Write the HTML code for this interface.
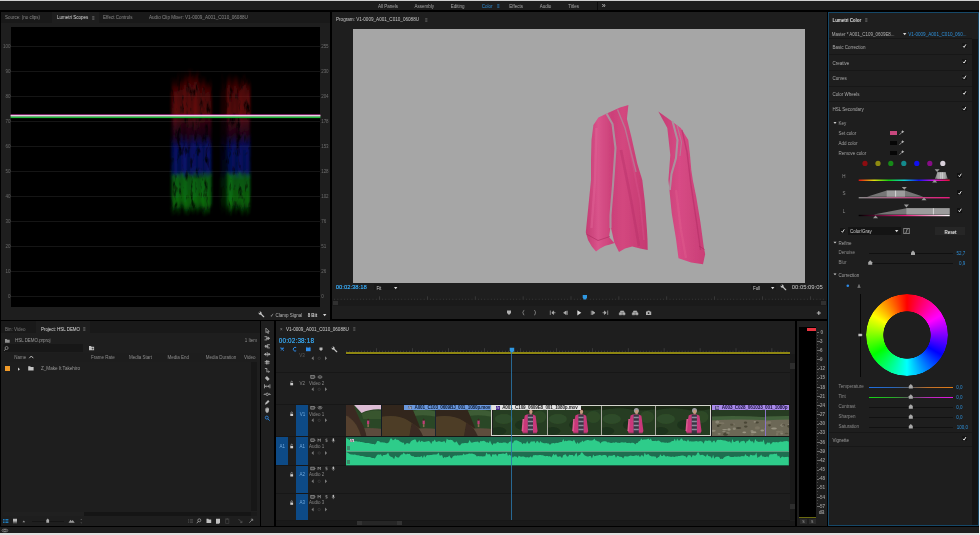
<!DOCTYPE html>
<html><head><meta charset="utf-8"><title>Premiere Pro - Lumetri Color</title>
<style>
html,body{margin:0;padding:0;background:#000}
body{width:980px;height:535px;position:relative;overflow:hidden;font-family:"Liberation Sans",sans-serif}
#app{position:absolute;left:0;top:0;width:980px;height:535px;will-change:transform}
#app>div,#app>svg{position:absolute}
svg{overflow:visible}
.t{white-space:nowrap}
</style></head><body><div id="app">
<div style="left:0px;top:0px;width:980px;height:1.05px;background:#d0d0d0;"></div>
<div style="left:0px;top:1.05px;width:980px;height:9.45px;background:#1d1d1d;"></div>
<div style="left:0px;top:533.3px;width:980px;height:1.7px;background:#e0e0e0;"></div>
<div style="left:0px;top:527.3px;width:980px;height:6px;background:#1d1d1d;"></div>
<div class="t" style="left:377.9px;top:4.20px;font-size:4.5px;line-height:5.40px;color:#a8a8a8;">All Panels</div>
<div class="t" style="left:414.4px;top:4.20px;font-size:4.5px;line-height:5.40px;color:#a8a8a8;">Assembly</div>
<div class="t" style="left:450.7px;top:4.20px;font-size:4.5px;line-height:5.40px;color:#a8a8a8;">Editing</div>
<div class="t" style="left:481.7px;top:4.20px;font-size:4.5px;line-height:5.40px;color:#2e8fd8;">Color</div>
<div class="t" style="left:509.3px;top:4.20px;font-size:4.5px;line-height:5.40px;color:#a8a8a8;">Effects</div>
<div class="t" style="left:539.8px;top:4.20px;font-size:4.5px;line-height:5.40px;color:#a8a8a8;">Audio</div>
<div class="t" style="left:568.3px;top:4.20px;font-size:4.5px;line-height:5.40px;color:#a8a8a8;">Titles</div>
<svg style="left:497.3px;top:4px" width="3" height="4" viewBox="0 0 3 4"><path d="M0.2 0.7 h2.2 M0.2 2 h2.2 M0.2 3.3 h2.2" stroke="#2e8fd8" stroke-width="0.6"/></svg>
<div class="t" style="left:601.8px;top:2.00px;font-size:7px;line-height:8.40px;color:#c4c4c4;">»</div>
<div style="left:596.5px;top:1.5px;width:0.6px;height:8.5px;background:#0c0c0c;"></div>
<div style="left:1.1px;top:12px;width:328.9px;height:307.5px;background:#1e1e1e;"></div>
<div style="left:1.1px;top:12px;width:328.9px;height:10.6px;background:#191919;"></div>
<div style="left:52px;top:12px;width:46.5px;height:10.6px;background:#1e1e1e;"></div>
<div class="t" style="left:5px;top:15.00px;font-size:4.5px;line-height:5.40px;color:#8a8a8a;">Source: (no clips)</div>
<div class="t" style="left:57px;top:15.00px;font-size:4.5px;line-height:5.40px;color:#dcdcdc;">Lumetri Scopes</div>
<svg style="left:92px;top:15.8px" width="3" height="4" viewBox="0 0 3 4"><path d="M0.2 0.7 h2.2 M0.2 2 h2.2 M0.2 3.3 h2.2" stroke="#8a8a8a" stroke-width="0.6"/></svg>
<div class="t" style="left:103px;top:15.00px;font-size:4.5px;line-height:5.40px;color:#8a8a8a;">Effect Controls</div>
<div class="t" style="left:149px;top:14.94px;font-size:4.6px;line-height:5.52px;color:#8a8a8a;">Audio Clip Mixer: V1-0009_A001_C010_06088U</div>
<div style="left:10.6px;top:27px;width:309.9px;height:280.3px;background:#000;"></div>
<div style="left:11px;top:45.7px;width:309.5px;height:0.7px;background:#151515;"></div>
<div class="t" style="right:969.7px;top:44.30px;font-size:4.5px;line-height:5.40px;color:#6c6c6c;text-align:right;letter-spacing:-0.10px;">100</div>
<div class="t" style="left:321.3px;top:44.30px;font-size:4.5px;line-height:5.40px;color:#6c6c6c;letter-spacing:-0.10px;">255</div>
<div style="left:11px;top:70.7px;width:309.5px;height:0.7px;background:#151515;"></div>
<div class="t" style="right:969.7px;top:69.30px;font-size:4.5px;line-height:5.40px;color:#6c6c6c;text-align:right;letter-spacing:-0.10px;">90</div>
<div class="t" style="left:321.3px;top:69.30px;font-size:4.5px;line-height:5.40px;color:#6c6c6c;letter-spacing:-0.10px;">230</div>
<div style="left:11px;top:95.7px;width:309.5px;height:0.7px;background:#151515;"></div>
<div class="t" style="right:969.7px;top:94.30px;font-size:4.5px;line-height:5.40px;color:#6c6c6c;text-align:right;letter-spacing:-0.10px;">80</div>
<div class="t" style="left:321.3px;top:94.30px;font-size:4.5px;line-height:5.40px;color:#6c6c6c;letter-spacing:-0.10px;">204</div>
<div style="left:11px;top:120.7px;width:309.5px;height:0.7px;background:#151515;"></div>
<div class="t" style="right:969.7px;top:119.30px;font-size:4.5px;line-height:5.40px;color:#6c6c6c;text-align:right;letter-spacing:-0.10px;">70</div>
<div class="t" style="left:321.3px;top:119.30px;font-size:4.5px;line-height:5.40px;color:#6c6c6c;letter-spacing:-0.10px;">178</div>
<div style="left:11px;top:145.7px;width:309.5px;height:0.7px;background:#151515;"></div>
<div class="t" style="right:969.7px;top:144.30px;font-size:4.5px;line-height:5.40px;color:#6c6c6c;text-align:right;letter-spacing:-0.10px;">60</div>
<div class="t" style="left:321.3px;top:144.30px;font-size:4.5px;line-height:5.40px;color:#6c6c6c;letter-spacing:-0.10px;">153</div>
<div style="left:11px;top:170.7px;width:309.5px;height:0.7px;background:#151515;"></div>
<div class="t" style="right:969.7px;top:169.30px;font-size:4.5px;line-height:5.40px;color:#6c6c6c;text-align:right;letter-spacing:-0.10px;">50</div>
<div class="t" style="left:321.3px;top:169.30px;font-size:4.5px;line-height:5.40px;color:#6c6c6c;letter-spacing:-0.10px;">128</div>
<div style="left:11px;top:195.7px;width:309.5px;height:0.7px;background:#151515;"></div>
<div class="t" style="right:969.7px;top:194.30px;font-size:4.5px;line-height:5.40px;color:#6c6c6c;text-align:right;letter-spacing:-0.10px;">40</div>
<div class="t" style="left:321.3px;top:194.30px;font-size:4.5px;line-height:5.40px;color:#6c6c6c;letter-spacing:-0.10px;">102</div>
<div style="left:11px;top:220.7px;width:309.5px;height:0.7px;background:#151515;"></div>
<div class="t" style="right:969.7px;top:219.30px;font-size:4.5px;line-height:5.40px;color:#6c6c6c;text-align:right;letter-spacing:-0.10px;">30</div>
<div class="t" style="left:321.3px;top:219.30px;font-size:4.5px;line-height:5.40px;color:#6c6c6c;letter-spacing:-0.10px;">76</div>
<div style="left:11px;top:245.7px;width:309.5px;height:0.7px;background:#151515;"></div>
<div class="t" style="right:969.7px;top:244.30px;font-size:4.5px;line-height:5.40px;color:#6c6c6c;text-align:right;letter-spacing:-0.10px;">20</div>
<div class="t" style="left:321.3px;top:244.30px;font-size:4.5px;line-height:5.40px;color:#6c6c6c;letter-spacing:-0.10px;">51</div>
<div style="left:11px;top:270.7px;width:309.5px;height:0.7px;background:#151515;"></div>
<div class="t" style="right:969.7px;top:269.30px;font-size:4.5px;line-height:5.40px;color:#6c6c6c;text-align:right;letter-spacing:-0.10px;">10</div>
<div class="t" style="left:321.3px;top:269.30px;font-size:4.5px;line-height:5.40px;color:#6c6c6c;letter-spacing:-0.10px;">26</div>
<div style="left:11px;top:295.7px;width:309.5px;height:0.7px;background:#151515;"></div>
<div class="t" style="right:969.7px;top:294.30px;font-size:4.5px;line-height:5.40px;color:#6c6c6c;text-align:right;letter-spacing:-0.10px;">0</div>
<div class="t" style="left:321.3px;top:294.30px;font-size:4.5px;line-height:5.40px;color:#6c6c6c;letter-spacing:-0.10px;">0</div>
<svg style="left:0px;top:0px;" width="330" height="320" viewBox="0 0 330 320"><defs>
<linearGradient id="gr" x1="0" y1="0" x2="0" y2="1"><stop offset="0" stop-color="#8a0c0c" stop-opacity="0"/><stop offset="0.3" stop-color="#8a0c0c" stop-opacity="0.8"/><stop offset="1" stop-color="#8e0e10"/></linearGradient>
<linearGradient id="gp" x1="0" y1="0" x2="0" y2="1"><stop offset="0" stop-color="#8a1020"/><stop offset="1" stop-color="#5a1060" stop-opacity="0.3"/></linearGradient>
<linearGradient id="gb" x1="0" y1="0" x2="0" y2="1"><stop offset="0" stop-color="#101aa0" stop-opacity="0.2"/><stop offset="0.25" stop-color="#0c1cb0"/><stop offset="0.85" stop-color="#0c22a8"/><stop offset="1" stop-color="#0a3a70"/></linearGradient>
<linearGradient id="gg" x1="0" y1="0" x2="0" y2="1"><stop offset="0" stop-color="#0c7a1a"/><stop offset="0.75" stop-color="#0e8a12"/><stop offset="1" stop-color="#0a6a0a" stop-opacity="0.15"/></linearGradient>
<filter id="bl" x="-5%" y="-5%" width="110%" height="110%"><feTurbulence type="fractalNoise" baseFrequency="0.22 0.07" numOctaves="3" seed="5" result="n"/><feColorMatrix in="n" type="matrix" values="0 0 0 0 0 0 0 0 0 0 0 0 0 0 0 2.8 0 0 0 -0.3" result="a"/><feGaussianBlur in="SourceGraphic" stdDeviation="0.8" result="b"/><feComposite in="b" in2="a" operator="in"/></filter>
</defs><g filter="url(#bl)" opacity="0.88"><rect x="170.5" y="85.4" width="1.1" height="31.6" fill="url(#gr)" opacity="0.28"/><rect x="170.5" y="118" width="1.1" height="27.4" fill="url(#gp)" opacity="0.12"/><rect x="170.5" y="135.7" width="1.1" height="38.7" fill="url(#gb)" opacity="0.19"/><rect x="170.5" y="172.2" width="1.1" height="39.7" fill="url(#gg)" opacity="0.24"/><rect x="171.4" y="74.7" width="1.1" height="42.3" fill="url(#gr)" opacity="0.57"/><rect x="171.4" y="118" width="1.1" height="24.2" fill="url(#gp)" opacity="0.23"/><rect x="171.4" y="138.3" width="1.1" height="41.4" fill="url(#gb)" opacity="0.38"/><rect x="171.4" y="174.4" width="1.1" height="42.4" fill="url(#gg)" opacity="0.43"/><rect x="172.3" y="81.0" width="1.1" height="36.0" fill="url(#gr)" opacity="0.54"/><rect x="172.3" y="118" width="1.1" height="25.1" fill="url(#gp)" opacity="0.33"/><rect x="172.3" y="140.2" width="1.1" height="34.9" fill="url(#gb)" opacity="0.55"/><rect x="172.3" y="175.8" width="1.1" height="35.5" fill="url(#gg)" opacity="0.80"/><rect x="173.2" y="81.2" width="1.1" height="35.8" fill="url(#gr)" opacity="0.59"/><rect x="173.2" y="118" width="1.1" height="26.3" fill="url(#gp)" opacity="0.57"/><rect x="173.2" y="135.1" width="1.1" height="42.4" fill="url(#gb)" opacity="0.53"/><rect x="173.2" y="173.8" width="1.1" height="41.4" fill="url(#gg)" opacity="0.89"/><rect x="174.1" y="74.3" width="1.1" height="42.7" fill="url(#gr)" opacity="0.74"/><rect x="174.1" y="118" width="1.1" height="29.3" fill="url(#gp)" opacity="0.65"/><rect x="174.1" y="134.9" width="1.1" height="45.0" fill="url(#gb)" opacity="0.40"/><rect x="174.1" y="174.5" width="1.1" height="40.3" fill="url(#gg)" opacity="0.70"/><rect x="175.0" y="84.0" width="1.1" height="33.0" fill="url(#gr)" opacity="0.80"/><rect x="175.0" y="118" width="1.1" height="27.7" fill="url(#gp)" opacity="0.61"/><rect x="175.0" y="140.8" width="1.1" height="35.1" fill="url(#gb)" opacity="0.63"/><rect x="175.0" y="175.6" width="1.1" height="37.7" fill="url(#gg)" opacity="0.81"/><rect x="175.9" y="78.6" width="1.1" height="38.4" fill="url(#gr)" opacity="0.71"/><rect x="175.9" y="118" width="1.1" height="22.6" fill="url(#gp)" opacity="0.57"/><rect x="175.9" y="139.0" width="1.1" height="38.9" fill="url(#gb)" opacity="0.75"/><rect x="175.9" y="176.9" width="1.1" height="33.6" fill="url(#gg)" opacity="0.79"/><rect x="176.8" y="84.5" width="1.1" height="32.5" fill="url(#gr)" opacity="0.71"/><rect x="176.8" y="118" width="1.1" height="23.2" fill="url(#gp)" opacity="0.37"/><rect x="176.8" y="132.6" width="1.1" height="46.0" fill="url(#gb)" opacity="0.40"/><rect x="176.8" y="173.5" width="1.1" height="38.0" fill="url(#gg)" opacity="0.95"/><rect x="177.7" y="70.7" width="1.1" height="46.3" fill="url(#gr)" opacity="0.75"/><rect x="177.7" y="118" width="1.1" height="30.2" fill="url(#gp)" opacity="0.65"/><rect x="177.7" y="140.6" width="1.1" height="35.0" fill="url(#gb)" opacity="0.52"/><rect x="177.7" y="174.2" width="1.1" height="41.8" fill="url(#gg)" opacity="0.99"/><rect x="178.6" y="78.9" width="1.1" height="38.1" fill="url(#gr)" opacity="0.60"/><rect x="178.6" y="118" width="1.1" height="26.8" fill="url(#gp)" opacity="0.39"/><rect x="178.6" y="137.9" width="1.1" height="37.7" fill="url(#gb)" opacity="0.35"/><rect x="178.6" y="174.5" width="1.1" height="36.8" fill="url(#gg)" opacity="0.85"/><rect x="179.5" y="77.7" width="1.1" height="39.3" fill="url(#gr)" opacity="0.73"/><rect x="179.5" y="118" width="1.1" height="28.8" fill="url(#gp)" opacity="0.55"/><rect x="179.5" y="132.5" width="1.1" height="46.9" fill="url(#gb)" opacity="0.66"/><rect x="179.5" y="177.2" width="1.1" height="37.9" fill="url(#gg)" opacity="0.79"/><rect x="180.4" y="80.3" width="1.1" height="36.7" fill="url(#gr)" opacity="0.79"/><rect x="180.4" y="118" width="1.1" height="22.7" fill="url(#gp)" opacity="0.32"/><rect x="180.4" y="134.1" width="1.1" height="40.9" fill="url(#gb)" opacity="0.49"/><rect x="180.4" y="172.3" width="1.1" height="35.7" fill="url(#gg)" opacity="0.70"/><rect x="181.3" y="69.2" width="1.1" height="47.8" fill="url(#gr)" opacity="0.51"/><rect x="181.3" y="118" width="1.1" height="28.1" fill="url(#gp)" opacity="0.65"/><rect x="181.3" y="133.5" width="1.1" height="42.0" fill="url(#gb)" opacity="0.49"/><rect x="181.3" y="174.2" width="1.1" height="34.9" fill="url(#gg)" opacity="0.95"/><rect x="182.2" y="76.8" width="1.1" height="40.2" fill="url(#gr)" opacity="0.72"/><rect x="182.2" y="118" width="1.1" height="23.0" fill="url(#gp)" opacity="0.33"/><rect x="182.2" y="135.4" width="1.1" height="40.2" fill="url(#gb)" opacity="0.68"/><rect x="182.2" y="173.0" width="1.1" height="35.2" fill="url(#gg)" opacity="0.98"/><rect x="183.1" y="80.3" width="1.1" height="36.7" fill="url(#gr)" opacity="0.74"/><rect x="183.1" y="118" width="1.1" height="27.3" fill="url(#gp)" opacity="0.31"/><rect x="183.1" y="141.8" width="1.1" height="37.4" fill="url(#gb)" opacity="0.63"/><rect x="183.1" y="173.6" width="1.1" height="37.7" fill="url(#gg)" opacity="0.71"/><rect x="184.0" y="74.1" width="1.1" height="42.9" fill="url(#gr)" opacity="0.85"/><rect x="184.0" y="118" width="1.1" height="24.2" fill="url(#gp)" opacity="0.43"/><rect x="184.0" y="140.1" width="1.1" height="39.8" fill="url(#gb)" opacity="0.69"/><rect x="184.0" y="176.8" width="1.1" height="38.5" fill="url(#gg)" opacity="0.91"/><rect x="184.9" y="68.9" width="1.1" height="48.1" fill="url(#gr)" opacity="0.66"/><rect x="184.9" y="118" width="1.1" height="22.3" fill="url(#gp)" opacity="0.31"/><rect x="184.9" y="134.8" width="1.1" height="40.8" fill="url(#gb)" opacity="0.63"/><rect x="184.9" y="177.7" width="1.1" height="34.3" fill="url(#gg)" opacity="0.98"/><rect x="185.8" y="75.5" width="1.1" height="41.5" fill="url(#gr)" opacity="0.66"/><rect x="185.8" y="118" width="1.1" height="24.3" fill="url(#gp)" opacity="0.39"/><rect x="185.8" y="134.0" width="1.1" height="41.3" fill="url(#gb)" opacity="0.60"/><rect x="185.8" y="177.4" width="1.1" height="38.2" fill="url(#gg)" opacity="0.82"/><rect x="186.7" y="72.2" width="1.1" height="44.8" fill="url(#gr)" opacity="0.54"/><rect x="186.7" y="118" width="1.1" height="31.1" fill="url(#gp)" opacity="0.56"/><rect x="186.7" y="139.8" width="1.1" height="38.7" fill="url(#gb)" opacity="0.54"/><rect x="186.7" y="173.1" width="1.1" height="42.0" fill="url(#gg)" opacity="0.77"/><rect x="187.6" y="73.4" width="1.1" height="43.6" fill="url(#gr)" opacity="0.68"/><rect x="187.6" y="118" width="1.1" height="31.5" fill="url(#gp)" opacity="0.46"/><rect x="187.6" y="139.2" width="1.1" height="35.8" fill="url(#gb)" opacity="0.40"/><rect x="187.6" y="172.9" width="1.1" height="43.2" fill="url(#gg)" opacity="0.93"/><rect x="188.5" y="67.3" width="1.1" height="49.7" fill="url(#gr)" opacity="0.94"/><rect x="188.5" y="118" width="1.1" height="25.5" fill="url(#gp)" opacity="0.56"/><rect x="188.5" y="137.5" width="1.1" height="37.3" fill="url(#gb)" opacity="0.36"/><rect x="188.5" y="177.8" width="1.1" height="36.0" fill="url(#gg)" opacity="0.83"/><rect x="189.4" y="74.4" width="1.1" height="42.6" fill="url(#gr)" opacity="0.89"/><rect x="189.4" y="118" width="1.1" height="24.1" fill="url(#gp)" opacity="0.63"/><rect x="189.4" y="134.5" width="1.1" height="41.2" fill="url(#gb)" opacity="0.45"/><rect x="189.4" y="175.5" width="1.1" height="34.8" fill="url(#gg)" opacity="0.80"/><rect x="190.3" y="67.3" width="1.1" height="49.7" fill="url(#gr)" opacity="0.66"/><rect x="190.3" y="118" width="1.1" height="27.8" fill="url(#gp)" opacity="0.48"/><rect x="190.3" y="141.0" width="1.1" height="35.5" fill="url(#gb)" opacity="0.72"/><rect x="190.3" y="175.0" width="1.1" height="37.8" fill="url(#gg)" opacity="0.83"/><rect x="191.2" y="66.5" width="1.1" height="50.5" fill="url(#gr)" opacity="0.58"/><rect x="191.2" y="118" width="1.1" height="30.0" fill="url(#gp)" opacity="0.30"/><rect x="191.2" y="133.7" width="1.1" height="43.1" fill="url(#gb)" opacity="0.64"/><rect x="191.2" y="175.3" width="1.1" height="35.6" fill="url(#gg)" opacity="0.83"/><rect x="192.1" y="71.6" width="1.1" height="45.4" fill="url(#gr)" opacity="0.55"/><rect x="192.1" y="118" width="1.1" height="24.5" fill="url(#gp)" opacity="0.52"/><rect x="192.1" y="134.8" width="1.1" height="43.9" fill="url(#gb)" opacity="0.55"/><rect x="192.1" y="175.4" width="1.1" height="39.5" fill="url(#gg)" opacity="0.97"/><rect x="193.0" y="70.9" width="1.1" height="46.1" fill="url(#gr)" opacity="0.73"/><rect x="193.0" y="118" width="1.1" height="28.9" fill="url(#gp)" opacity="0.50"/><rect x="193.0" y="136.5" width="1.1" height="40.7" fill="url(#gb)" opacity="0.54"/><rect x="193.0" y="177.6" width="1.1" height="36.6" fill="url(#gg)" opacity="0.96"/><rect x="193.9" y="75.7" width="1.1" height="41.3" fill="url(#gr)" opacity="0.75"/><rect x="193.9" y="118" width="1.1" height="30.4" fill="url(#gp)" opacity="0.68"/><rect x="193.9" y="133.4" width="1.1" height="41.4" fill="url(#gb)" opacity="0.53"/><rect x="193.9" y="172.4" width="1.1" height="37.7" fill="url(#gg)" opacity="0.68"/><rect x="194.8" y="73.5" width="1.1" height="43.5" fill="url(#gr)" opacity="0.90"/><rect x="194.8" y="118" width="1.1" height="29.2" fill="url(#gp)" opacity="0.36"/><rect x="194.8" y="138.6" width="1.1" height="36.3" fill="url(#gb)" opacity="0.70"/><rect x="194.8" y="177.8" width="1.1" height="32.2" fill="url(#gg)" opacity="0.98"/><rect x="195.7" y="71.5" width="1.1" height="45.5" fill="url(#gr)" opacity="0.95"/><rect x="195.7" y="118" width="1.1" height="23.6" fill="url(#gp)" opacity="0.63"/><rect x="195.7" y="136.3" width="1.1" height="40.8" fill="url(#gb)" opacity="0.49"/><rect x="195.7" y="173.2" width="1.1" height="37.7" fill="url(#gg)" opacity="0.90"/><rect x="196.6" y="68.4" width="1.1" height="48.6" fill="url(#gr)" opacity="0.70"/><rect x="196.6" y="118" width="1.1" height="25.3" fill="url(#gp)" opacity="0.31"/><rect x="196.6" y="138.2" width="1.1" height="38.8" fill="url(#gb)" opacity="0.38"/><rect x="196.6" y="177.9" width="1.1" height="37.2" fill="url(#gg)" opacity="0.99"/><rect x="197.5" y="69.6" width="1.1" height="47.4" fill="url(#gr)" opacity="0.52"/><rect x="197.5" y="118" width="1.1" height="24.7" fill="url(#gp)" opacity="0.61"/><rect x="197.5" y="133.3" width="1.1" height="43.2" fill="url(#gb)" opacity="0.71"/><rect x="197.5" y="176.9" width="1.1" height="33.4" fill="url(#gg)" opacity="0.70"/><rect x="198.4" y="77.4" width="1.1" height="39.6" fill="url(#gr)" opacity="0.82"/><rect x="198.4" y="118" width="1.1" height="22.6" fill="url(#gp)" opacity="0.34"/><rect x="198.4" y="138.9" width="1.1" height="37.7" fill="url(#gb)" opacity="0.38"/><rect x="198.4" y="177.6" width="1.1" height="36.1" fill="url(#gg)" opacity="0.93"/><rect x="199.3" y="70.3" width="1.1" height="46.7" fill="url(#gr)" opacity="0.53"/><rect x="199.3" y="118" width="1.1" height="26.5" fill="url(#gp)" opacity="0.65"/><rect x="199.3" y="135.4" width="1.1" height="41.9" fill="url(#gb)" opacity="0.72"/><rect x="199.3" y="173.6" width="1.1" height="35.6" fill="url(#gg)" opacity="0.83"/><rect x="200.2" y="80.2" width="1.1" height="36.8" fill="url(#gr)" opacity="0.57"/><rect x="200.2" y="118" width="1.1" height="24.0" fill="url(#gp)" opacity="0.32"/><rect x="200.2" y="135.1" width="1.1" height="40.7" fill="url(#gb)" opacity="0.65"/><rect x="200.2" y="173.7" width="1.1" height="38.8" fill="url(#gg)" opacity="0.71"/><rect x="201.1" y="81.6" width="1.1" height="35.4" fill="url(#gr)" opacity="0.61"/><rect x="201.1" y="118" width="1.1" height="29.3" fill="url(#gp)" opacity="0.31"/><rect x="201.1" y="137.5" width="1.1" height="37.6" fill="url(#gb)" opacity="0.54"/><rect x="201.1" y="177.6" width="1.1" height="31.3" fill="url(#gg)" opacity="0.94"/><rect x="202.0" y="74.9" width="1.1" height="42.1" fill="url(#gr)" opacity="0.88"/><rect x="202.0" y="118" width="1.1" height="27.1" fill="url(#gp)" opacity="0.46"/><rect x="202.0" y="138.9" width="1.1" height="41.0" fill="url(#gb)" opacity="0.49"/><rect x="202.0" y="177.0" width="1.1" height="37.4" fill="url(#gg)" opacity="0.87"/><rect x="202.9" y="75.2" width="1.1" height="41.8" fill="url(#gr)" opacity="0.52"/><rect x="202.9" y="118" width="1.1" height="22.7" fill="url(#gp)" opacity="0.35"/><rect x="202.9" y="139.4" width="1.1" height="36.1" fill="url(#gb)" opacity="0.42"/><rect x="202.9" y="172.5" width="1.1" height="43.1" fill="url(#gg)" opacity="0.95"/><rect x="203.8" y="78.1" width="1.1" height="38.9" fill="url(#gr)" opacity="0.61"/><rect x="203.8" y="118" width="1.1" height="26.6" fill="url(#gp)" opacity="0.42"/><rect x="203.8" y="133.6" width="1.1" height="43.1" fill="url(#gb)" opacity="0.46"/><rect x="203.8" y="177.8" width="1.1" height="39.0" fill="url(#gg)" opacity="0.84"/><rect x="204.7" y="74.9" width="1.1" height="42.1" fill="url(#gr)" opacity="0.64"/><rect x="204.7" y="118" width="1.1" height="22.0" fill="url(#gp)" opacity="0.44"/><rect x="204.7" y="135.8" width="1.1" height="41.0" fill="url(#gb)" opacity="0.55"/><rect x="204.7" y="173.2" width="1.1" height="39.3" fill="url(#gg)" opacity="0.65"/><rect x="205.6" y="83.6" width="1.1" height="33.4" fill="url(#gr)" opacity="0.68"/><rect x="205.6" y="118" width="1.1" height="22.2" fill="url(#gp)" opacity="0.32"/><rect x="205.6" y="135.0" width="1.1" height="40.4" fill="url(#gb)" opacity="0.58"/><rect x="205.6" y="175.2" width="1.1" height="39.6" fill="url(#gg)" opacity="0.88"/><rect x="206.5" y="80.3" width="1.1" height="36.7" fill="url(#gr)" opacity="0.68"/><rect x="206.5" y="118" width="1.1" height="31.8" fill="url(#gp)" opacity="0.43"/><rect x="206.5" y="133.5" width="1.1" height="44.9" fill="url(#gb)" opacity="0.61"/><rect x="206.5" y="172.3" width="1.1" height="43.3" fill="url(#gg)" opacity="0.96"/><rect x="207.4" y="80.1" width="1.1" height="36.9" fill="url(#gr)" opacity="0.87"/><rect x="207.4" y="118" width="1.1" height="27.2" fill="url(#gp)" opacity="0.36"/><rect x="207.4" y="137.0" width="1.1" height="42.0" fill="url(#gb)" opacity="0.67"/><rect x="207.4" y="177.0" width="1.1" height="36.3" fill="url(#gg)" opacity="0.96"/><rect x="208.3" y="81.2" width="1.1" height="35.8" fill="url(#gr)" opacity="0.60"/><rect x="208.3" y="118" width="1.1" height="23.3" fill="url(#gp)" opacity="0.31"/><rect x="208.3" y="135.6" width="1.1" height="39.0" fill="url(#gb)" opacity="0.68"/><rect x="208.3" y="175.4" width="1.1" height="38.3" fill="url(#gg)" opacity="0.87"/><rect x="209.2" y="81.8" width="1.1" height="35.2" fill="url(#gr)" opacity="0.50"/><rect x="209.2" y="118" width="1.1" height="29.5" fill="url(#gp)" opacity="0.62"/><rect x="209.2" y="137.0" width="1.1" height="40.2" fill="url(#gb)" opacity="0.61"/><rect x="209.2" y="172.4" width="1.1" height="42.2" fill="url(#gg)" opacity="0.74"/><rect x="210.1" y="77.0" width="1.1" height="40.0" fill="url(#gr)" opacity="0.68"/><rect x="210.1" y="118" width="1.1" height="29.4" fill="url(#gp)" opacity="0.31"/><rect x="210.1" y="141.8" width="1.1" height="35.2" fill="url(#gb)" opacity="0.41"/><rect x="210.1" y="174.9" width="1.1" height="39.3" fill="url(#gg)" opacity="0.75"/><rect x="211.0" y="82.6" width="1.1" height="34.4" fill="url(#gr)" opacity="0.28"/><rect x="211.0" y="118" width="1.1" height="24.5" fill="url(#gp)" opacity="0.19"/><rect x="211.0" y="139.4" width="1.1" height="36.4" fill="url(#gb)" opacity="0.30"/><rect x="211.0" y="172.1" width="1.1" height="36.5" fill="url(#gg)" opacity="0.38"/><rect x="219.5" y="80.5" width="1.1" height="36.5" fill="url(#gr)" opacity="0.07"/><rect x="219.5" y="118" width="1.1" height="27.2" fill="url(#gp)" opacity="0.04"/><rect x="219.5" y="136.6" width="1.1" height="40.2" fill="url(#gb)" opacity="0.03"/><rect x="219.5" y="177.4" width="1.1" height="32.4" fill="url(#gg)" opacity="0.09"/><rect x="220.4" y="87.0" width="1.1" height="30.0" fill="url(#gr)" opacity="0.11"/><rect x="220.4" y="118" width="1.1" height="31.7" fill="url(#gp)" opacity="0.10"/><rect x="220.4" y="136.5" width="1.1" height="39.1" fill="url(#gb)" opacity="0.07"/><rect x="220.4" y="177.7" width="1.1" height="32.2" fill="url(#gg)" opacity="0.14"/><rect x="221.3" y="68.9" width="1.1" height="48.1" fill="url(#gr)" opacity="0.22"/><rect x="221.3" y="118" width="1.1" height="30.2" fill="url(#gp)" opacity="0.08"/><rect x="221.3" y="137.1" width="1.1" height="42.2" fill="url(#gb)" opacity="0.15"/><rect x="221.3" y="173.4" width="1.1" height="42.7" fill="url(#gg)" opacity="0.19"/><rect x="222.2" y="74.2" width="1.1" height="42.8" fill="url(#gr)" opacity="0.18"/><rect x="222.2" y="118" width="1.1" height="25.0" fill="url(#gp)" opacity="0.12"/><rect x="222.2" y="133.4" width="1.1" height="42.7" fill="url(#gb)" opacity="0.12"/><rect x="222.2" y="177.0" width="1.1" height="31.0" fill="url(#gg)" opacity="0.23"/><rect x="223.1" y="83.2" width="1.1" height="33.8" fill="url(#gr)" opacity="0.23"/><rect x="223.1" y="118" width="1.1" height="31.0" fill="url(#gp)" opacity="0.15"/><rect x="223.1" y="134.9" width="1.1" height="41.3" fill="url(#gb)" opacity="0.13"/><rect x="223.1" y="178.0" width="1.1" height="35.3" fill="url(#gg)" opacity="0.19"/><rect x="224.0" y="74.5" width="1.1" height="42.5" fill="url(#gr)" opacity="0.11"/><rect x="224.0" y="118" width="1.1" height="30.3" fill="url(#gp)" opacity="0.07"/><rect x="224.0" y="134.9" width="1.1" height="44.8" fill="url(#gb)" opacity="0.10"/><rect x="224.0" y="173.6" width="1.1" height="39.0" fill="url(#gg)" opacity="0.15"/><rect x="224.9" y="77.8" width="1.1" height="39.2" fill="url(#gr)" opacity="0.12"/><rect x="224.9" y="118" width="1.1" height="28.3" fill="url(#gp)" opacity="0.09"/><rect x="224.9" y="141.1" width="1.1" height="38.5" fill="url(#gb)" opacity="0.08"/><rect x="224.9" y="176.3" width="1.1" height="32.1" fill="url(#gg)" opacity="0.12"/><rect x="225.5" y="78.5" width="1.1" height="38.5" fill="url(#gr)" opacity="0.28"/><rect x="225.5" y="118" width="1.1" height="22.5" fill="url(#gp)" opacity="0.15"/><rect x="225.5" y="141.3" width="1.1" height="33.5" fill="url(#gb)" opacity="0.19"/><rect x="225.5" y="174.1" width="1.1" height="36.6" fill="url(#gg)" opacity="0.32"/><rect x="226.4" y="82.2" width="1.1" height="34.8" fill="url(#gr)" opacity="0.52"/><rect x="226.4" y="118" width="1.1" height="27.6" fill="url(#gp)" opacity="0.27"/><rect x="226.4" y="135.9" width="1.1" height="39.1" fill="url(#gb)" opacity="0.27"/><rect x="226.4" y="173.2" width="1.1" height="42.9" fill="url(#gg)" opacity="0.54"/><rect x="227.3" y="74.4" width="1.1" height="42.6" fill="url(#gr)" opacity="0.90"/><rect x="227.3" y="118" width="1.1" height="23.4" fill="url(#gp)" opacity="0.46"/><rect x="227.3" y="133.9" width="1.1" height="40.6" fill="url(#gb)" opacity="0.46"/><rect x="227.3" y="172.5" width="1.1" height="37.6" fill="url(#gg)" opacity="0.70"/><rect x="228.2" y="76.7" width="1.1" height="40.3" fill="url(#gr)" opacity="0.84"/><rect x="228.2" y="118" width="1.1" height="26.1" fill="url(#gp)" opacity="0.47"/><rect x="228.2" y="137.2" width="1.1" height="39.0" fill="url(#gb)" opacity="0.49"/><rect x="228.2" y="172.4" width="1.1" height="38.1" fill="url(#gg)" opacity="0.99"/><rect x="229.1" y="71.8" width="1.1" height="45.2" fill="url(#gr)" opacity="0.78"/><rect x="229.1" y="118" width="1.1" height="24.2" fill="url(#gp)" opacity="0.65"/><rect x="229.1" y="134.7" width="1.1" height="40.8" fill="url(#gb)" opacity="0.51"/><rect x="229.1" y="174.7" width="1.1" height="41.9" fill="url(#gg)" opacity="0.95"/><rect x="230.0" y="85.7" width="1.1" height="31.3" fill="url(#gr)" opacity="0.51"/><rect x="230.0" y="118" width="1.1" height="31.0" fill="url(#gp)" opacity="0.58"/><rect x="230.0" y="136.7" width="1.1" height="40.8" fill="url(#gb)" opacity="0.35"/><rect x="230.0" y="174.3" width="1.1" height="42.0" fill="url(#gg)" opacity="0.94"/><rect x="230.9" y="76.8" width="1.1" height="40.2" fill="url(#gr)" opacity="0.61"/><rect x="230.9" y="118" width="1.1" height="23.5" fill="url(#gp)" opacity="0.34"/><rect x="230.9" y="137.2" width="1.1" height="40.9" fill="url(#gb)" opacity="0.73"/><rect x="230.9" y="176.3" width="1.1" height="37.5" fill="url(#gg)" opacity="0.92"/><rect x="231.8" y="72.5" width="1.1" height="44.5" fill="url(#gr)" opacity="0.52"/><rect x="231.8" y="118" width="1.1" height="24.3" fill="url(#gp)" opacity="0.61"/><rect x="231.8" y="141.2" width="1.1" height="36.7" fill="url(#gb)" opacity="0.47"/><rect x="231.8" y="172.8" width="1.1" height="37.5" fill="url(#gg)" opacity="0.87"/><rect x="232.7" y="82.0" width="1.1" height="35.0" fill="url(#gr)" opacity="0.53"/><rect x="232.7" y="118" width="1.1" height="27.8" fill="url(#gp)" opacity="0.51"/><rect x="232.7" y="135.9" width="1.1" height="39.5" fill="url(#gb)" opacity="0.59"/><rect x="232.7" y="172.1" width="1.1" height="38.7" fill="url(#gg)" opacity="0.81"/><rect x="233.6" y="75.8" width="1.1" height="41.2" fill="url(#gr)" opacity="0.90"/><rect x="233.6" y="118" width="1.1" height="24.3" fill="url(#gp)" opacity="0.49"/><rect x="233.6" y="134.5" width="1.1" height="45.3" fill="url(#gb)" opacity="0.63"/><rect x="233.6" y="173.8" width="1.1" height="34.4" fill="url(#gg)" opacity="0.82"/><rect x="234.5" y="72.7" width="1.1" height="44.3" fill="url(#gr)" opacity="0.62"/><rect x="234.5" y="118" width="1.1" height="31.3" fill="url(#gp)" opacity="0.57"/><rect x="234.5" y="134.3" width="1.1" height="39.9" fill="url(#gb)" opacity="0.49"/><rect x="234.5" y="174.5" width="1.1" height="39.6" fill="url(#gg)" opacity="0.72"/><rect x="235.4" y="73.4" width="1.1" height="43.6" fill="url(#gr)" opacity="0.73"/><rect x="235.4" y="118" width="1.1" height="31.7" fill="url(#gp)" opacity="0.38"/><rect x="235.4" y="135.1" width="1.1" height="43.8" fill="url(#gb)" opacity="0.44"/><rect x="235.4" y="173.3" width="1.1" height="41.5" fill="url(#gg)" opacity="0.75"/><rect x="236.3" y="74.6" width="1.1" height="42.4" fill="url(#gr)" opacity="0.58"/><rect x="236.3" y="118" width="1.1" height="26.2" fill="url(#gp)" opacity="0.39"/><rect x="236.3" y="138.7" width="1.1" height="41.0" fill="url(#gb)" opacity="0.41"/><rect x="236.3" y="174.4" width="1.1" height="35.6" fill="url(#gg)" opacity="0.99"/><rect x="237.2" y="75.4" width="1.1" height="41.6" fill="url(#gr)" opacity="0.53"/><rect x="237.2" y="118" width="1.1" height="31.0" fill="url(#gp)" opacity="0.46"/><rect x="237.2" y="140.8" width="1.1" height="37.6" fill="url(#gb)" opacity="0.75"/><rect x="237.2" y="177.6" width="1.1" height="33.4" fill="url(#gg)" opacity="0.71"/><rect x="238.1" y="74.9" width="1.1" height="42.1" fill="url(#gr)" opacity="0.51"/><rect x="238.1" y="118" width="1.1" height="25.8" fill="url(#gp)" opacity="0.57"/><rect x="238.1" y="135.7" width="1.1" height="40.3" fill="url(#gb)" opacity="0.42"/><rect x="238.1" y="172.0" width="1.1" height="38.5" fill="url(#gg)" opacity="0.77"/><rect x="239.0" y="83.5" width="1.1" height="33.5" fill="url(#gr)" opacity="0.93"/><rect x="239.0" y="118" width="1.1" height="25.6" fill="url(#gp)" opacity="0.38"/><rect x="239.0" y="140.2" width="1.1" height="38.7" fill="url(#gb)" opacity="0.52"/><rect x="239.0" y="172.3" width="1.1" height="40.0" fill="url(#gg)" opacity="0.78"/><rect x="239.9" y="83.7" width="1.1" height="33.3" fill="url(#gr)" opacity="0.66"/><rect x="239.9" y="118" width="1.1" height="22.3" fill="url(#gp)" opacity="0.66"/><rect x="239.9" y="136.1" width="1.1" height="42.8" fill="url(#gb)" opacity="0.66"/><rect x="239.9" y="172.2" width="1.1" height="36.1" fill="url(#gg)" opacity="0.67"/><rect x="240.8" y="76.3" width="1.1" height="40.7" fill="url(#gr)" opacity="0.84"/><rect x="240.8" y="118" width="1.1" height="25.4" fill="url(#gp)" opacity="0.66"/><rect x="240.8" y="134.7" width="1.1" height="45.0" fill="url(#gb)" opacity="0.60"/><rect x="240.8" y="173.6" width="1.1" height="40.9" fill="url(#gg)" opacity="0.76"/><rect x="241.7" y="79.2" width="1.1" height="37.8" fill="url(#gr)" opacity="0.84"/><rect x="241.7" y="118" width="1.1" height="28.3" fill="url(#gp)" opacity="0.67"/><rect x="241.7" y="141.4" width="1.1" height="32.7" fill="url(#gb)" opacity="0.44"/><rect x="241.7" y="174.9" width="1.1" height="41.8" fill="url(#gg)" opacity="0.98"/><rect x="242.6" y="72.9" width="1.1" height="44.1" fill="url(#gr)" opacity="0.69"/><rect x="242.6" y="118" width="1.1" height="31.3" fill="url(#gp)" opacity="0.50"/><rect x="242.6" y="133.8" width="1.1" height="45.0" fill="url(#gb)" opacity="0.65"/><rect x="242.6" y="176.9" width="1.1" height="38.0" fill="url(#gg)" opacity="0.86"/><rect x="243.5" y="73.2" width="1.1" height="43.8" fill="url(#gr)" opacity="0.66"/><rect x="243.5" y="118" width="1.1" height="22.8" fill="url(#gp)" opacity="0.61"/><rect x="243.5" y="134.0" width="1.1" height="44.5" fill="url(#gb)" opacity="0.45"/><rect x="243.5" y="172.4" width="1.1" height="35.9" fill="url(#gg)" opacity="0.84"/><rect x="244.4" y="74.0" width="1.1" height="43.0" fill="url(#gr)" opacity="0.90"/><rect x="244.4" y="118" width="1.1" height="24.6" fill="url(#gp)" opacity="0.70"/><rect x="244.4" y="132.8" width="1.1" height="41.7" fill="url(#gb)" opacity="0.55"/><rect x="244.4" y="176.3" width="1.1" height="35.8" fill="url(#gg)" opacity="0.73"/><rect x="245.3" y="75.8" width="1.1" height="41.2" fill="url(#gr)" opacity="0.80"/><rect x="245.3" y="118" width="1.1" height="30.5" fill="url(#gp)" opacity="0.60"/><rect x="245.3" y="138.6" width="1.1" height="36.1" fill="url(#gb)" opacity="0.69"/><rect x="245.3" y="173.8" width="1.1" height="39.3" fill="url(#gg)" opacity="0.78"/><rect x="246.2" y="87.6" width="1.1" height="29.4" fill="url(#gr)" opacity="0.61"/><rect x="246.2" y="118" width="1.1" height="23.5" fill="url(#gp)" opacity="0.40"/><rect x="246.2" y="140.8" width="1.1" height="36.6" fill="url(#gb)" opacity="0.48"/><rect x="246.2" y="174.4" width="1.1" height="42.6" fill="url(#gg)" opacity="0.83"/><rect x="247.1" y="76.0" width="1.1" height="41.0" fill="url(#gr)" opacity="0.79"/><rect x="247.1" y="118" width="1.1" height="23.0" fill="url(#gp)" opacity="0.70"/><rect x="247.1" y="136.7" width="1.1" height="42.2" fill="url(#gb)" opacity="0.69"/><rect x="247.1" y="177.5" width="1.1" height="30.9" fill="url(#gg)" opacity="0.75"/><rect x="248.0" y="84.0" width="1.1" height="33.0" fill="url(#gr)" opacity="0.94"/><rect x="248.0" y="118" width="1.1" height="31.3" fill="url(#gp)" opacity="0.53"/><rect x="248.0" y="135.7" width="1.1" height="43.5" fill="url(#gb)" opacity="0.53"/><rect x="248.0" y="173.6" width="1.1" height="41.4" fill="url(#gg)" opacity="0.98"/><rect x="248.9" y="77.0" width="1.1" height="40.0" fill="url(#gr)" opacity="0.56"/><rect x="248.9" y="118" width="1.1" height="25.7" fill="url(#gp)" opacity="0.28"/><rect x="248.9" y="133.4" width="1.1" height="41.8" fill="url(#gb)" opacity="0.32"/><rect x="248.9" y="175.6" width="1.1" height="38.3" fill="url(#gg)" opacity="0.52"/><rect x="249.8" y="77.3" width="1.1" height="39.7" fill="url(#gr)" opacity="0.34"/><rect x="249.8" y="118" width="1.1" height="25.1" fill="url(#gp)" opacity="0.16"/><rect x="249.8" y="134.0" width="1.1" height="44.7" fill="url(#gb)" opacity="0.24"/><rect x="249.8" y="172.4" width="1.1" height="36.5" fill="url(#gg)" opacity="0.33"/></g><rect x="10.6" y="114.4" width="309.8" height="1.2" fill="#c83aa8"/><rect x="10.6" y="116.3" width="309.8" height="1.8" fill="#1fb83a"/><rect x="10.6" y="115.1" width="309.8" height="1.35" fill="#f6e2f0"/></svg>
<svg style="left:258.3px;top:310.9px" width="7" height="7" viewBox="0 0 7 7"><path d="M2.6 2.6 L5.7 5.7" stroke="#c4c4c4" stroke-width="1.25" stroke-linecap="round"/><circle cx="2.1" cy="2.1" r="1.55" fill="#c4c4c4"/><path d="M-0.2 0.4 L1.9 1.5 L1.5 1.9 L0.4 -0.2z" fill="#1e1e1e"/><path d="M0.2 0.2 L2.3 1.2 L1.2 2.3z" fill="#1e1e1e"/></svg>
<div class="t" style="left:270.3px;top:312.70px;font-size:4.5px;line-height:5.40px;color:#b8b8b8;">✓ Clamp Signal</div>
<div class="t" style="left:307.8px;top:312.70px;font-size:4.5px;line-height:5.40px;color:#d0d0d0;letter-spacing:-0.10px;font-weight:bold">8 Bit</div>
<svg style="left:322.5px;top:313.5px" width="3.4" height="2.4" viewBox="0 0 3.4 2.4"><path d="M0 0.1 h3.4 l-1.7 2.2z" fill="#d8d8d8"/></svg>
<div style="left:332px;top:12px;width:495px;height:307.1px;background:#1e1e1e;"></div>
<div class="t" style="left:336px;top:17.14px;font-size:4.6px;line-height:5.52px;color:#c8c8c8;">Program: V1-0009_A001_C010_06088U</div>
<svg style="left:425px;top:18px" width="3" height="4" viewBox="0 0 3 4"><path d="M0.2 0.7 h2.2 M0.2 2 h2.2 M0.2 3.3 h2.2" stroke="#7a7a7a" stroke-width="0.6"/></svg>
<div style="left:353.3px;top:28.5px;width:451.8px;height:254.2px;background:#a6a6a6;"></div>
<div class="t" style="left:335.7px;top:284.36px;font-size:5.9px;line-height:7.08px;color:#36a0e6;letter-spacing:0.0px;text-shadow:0 0 0.4px #36a0e6">00:02:38:18</div>
<div style="left:374px;top:284.3px;width:25px;height:6.2px;background:#191919;"></div>
<div class="t" style="left:376.5px;top:285.80px;font-size:4.5px;line-height:5.40px;color:#c8c8c8;letter-spacing:-0.10px;">Fit</div>
<svg style="left:393.90000000000003px;top:286.7px" width="3.4" height="2.4" viewBox="0 0 3.4 2.4"><path d="M0 0.1 h3.4 l-1.7 2.2z" fill="#d8d8d8"/></svg>
<div style="left:750.5px;top:284.3px;width:25px;height:6.2px;background:#191919;"></div>
<div class="t" style="left:753px;top:285.80px;font-size:4.5px;line-height:5.40px;color:#c8c8c8;letter-spacing:-0.10px;">Full</div>
<svg style="left:770.8px;top:286.7px" width="3.4" height="2.4" viewBox="0 0 3.4 2.4"><path d="M0 0.1 h3.4 l-1.7 2.2z" fill="#d8d8d8"/></svg>
<svg style="left:779.7px;top:284.1px" width="7" height="7" viewBox="0 0 7 7"><path d="M2.6 2.6 L5.7 5.7" stroke="#c4c4c4" stroke-width="1.25" stroke-linecap="round"/><circle cx="2.1" cy="2.1" r="1.55" fill="#c4c4c4"/><path d="M-0.2 0.4 L1.9 1.5 L1.5 1.9 L0.4 -0.2z" fill="#1e1e1e"/><path d="M0.2 0.2 L2.3 1.2 L1.2 2.3z" fill="#1e1e1e"/></svg>
<div class="t" style="left:791.7px;top:284.36px;font-size:5.9px;line-height:7.08px;color:#c8c8c8;letter-spacing:0.0px">00:05:09:05</div>
<svg style="left:0px;top:0px;" width="980" height="320" viewBox="0 0 980 320"><rect x="334.4" y="298.7" width="0.6" height="1.2" fill="#3e3e3e"/><rect x="337.6" y="298.7" width="0.6" height="1.2" fill="#3e3e3e"/><rect x="340.8" y="298.7" width="0.6" height="1.2" fill="#3e3e3e"/><rect x="344.0" y="298.7" width="0.6" height="1.2" fill="#3e3e3e"/><rect x="347.2" y="298.7" width="0.6" height="1.2" fill="#3e3e3e"/><rect x="350.4" y="298.7" width="0.6" height="1.2" fill="#3e3e3e"/><rect x="353.6" y="298.7" width="0.6" height="1.2" fill="#3e3e3e"/><rect x="356.8" y="298.7" width="0.6" height="1.2" fill="#3e3e3e"/><rect x="360.0" y="298.7" width="0.6" height="1.2" fill="#3e3e3e"/><rect x="363.2" y="298.7" width="0.6" height="1.2" fill="#3e3e3e"/><rect x="366.3" y="298.7" width="0.6" height="1.2" fill="#3e3e3e"/><rect x="369.5" y="298.7" width="0.6" height="1.2" fill="#3e3e3e"/><rect x="372.7" y="298.7" width="0.6" height="1.2" fill="#3e3e3e"/><rect x="375.9" y="298.7" width="0.6" height="1.2" fill="#3e3e3e"/><rect x="379.1" y="296.3" width="0.6" height="3.6" fill="#484848"/><rect x="382.3" y="298.7" width="0.6" height="1.2" fill="#3e3e3e"/><rect x="385.5" y="298.7" width="0.6" height="1.2" fill="#3e3e3e"/><rect x="388.7" y="298.7" width="0.6" height="1.2" fill="#3e3e3e"/><rect x="391.9" y="298.7" width="0.6" height="1.2" fill="#3e3e3e"/><rect x="395.1" y="298.7" width="0.6" height="1.2" fill="#3e3e3e"/><rect x="398.3" y="298.7" width="0.6" height="1.2" fill="#3e3e3e"/><rect x="401.5" y="298.7" width="0.6" height="1.2" fill="#3e3e3e"/><rect x="404.7" y="298.7" width="0.6" height="1.2" fill="#3e3e3e"/><rect x="407.9" y="298.7" width="0.6" height="1.2" fill="#3e3e3e"/><rect x="411.1" y="298.7" width="0.6" height="1.2" fill="#3e3e3e"/><rect x="414.2" y="298.7" width="0.6" height="1.2" fill="#3e3e3e"/><rect x="417.4" y="298.7" width="0.6" height="1.2" fill="#3e3e3e"/><rect x="420.6" y="298.7" width="0.6" height="1.2" fill="#3e3e3e"/><rect x="423.8" y="298.7" width="0.6" height="1.2" fill="#3e3e3e"/><rect x="427.0" y="296.3" width="0.6" height="3.6" fill="#484848"/><rect x="430.2" y="298.7" width="0.6" height="1.2" fill="#3e3e3e"/><rect x="433.4" y="298.7" width="0.6" height="1.2" fill="#3e3e3e"/><rect x="436.6" y="298.7" width="0.6" height="1.2" fill="#3e3e3e"/><rect x="439.8" y="298.7" width="0.6" height="1.2" fill="#3e3e3e"/><rect x="443.0" y="298.7" width="0.6" height="1.2" fill="#3e3e3e"/><rect x="446.2" y="298.7" width="0.6" height="1.2" fill="#3e3e3e"/><rect x="449.4" y="298.7" width="0.6" height="1.2" fill="#3e3e3e"/><rect x="452.6" y="298.7" width="0.6" height="1.2" fill="#3e3e3e"/><rect x="455.8" y="298.7" width="0.6" height="1.2" fill="#3e3e3e"/><rect x="458.9" y="298.7" width="0.6" height="1.2" fill="#3e3e3e"/><rect x="462.1" y="298.7" width="0.6" height="1.2" fill="#3e3e3e"/><rect x="465.3" y="298.7" width="0.6" height="1.2" fill="#3e3e3e"/><rect x="468.5" y="298.7" width="0.6" height="1.2" fill="#3e3e3e"/><rect x="471.7" y="298.7" width="0.6" height="1.2" fill="#3e3e3e"/><rect x="474.9" y="296.3" width="0.6" height="3.6" fill="#484848"/><rect x="478.1" y="298.7" width="0.6" height="1.2" fill="#3e3e3e"/><rect x="481.3" y="298.7" width="0.6" height="1.2" fill="#3e3e3e"/><rect x="484.5" y="298.7" width="0.6" height="1.2" fill="#3e3e3e"/><rect x="487.7" y="298.7" width="0.6" height="1.2" fill="#3e3e3e"/><rect x="490.9" y="298.7" width="0.6" height="1.2" fill="#3e3e3e"/><rect x="494.1" y="298.7" width="0.6" height="1.2" fill="#3e3e3e"/><rect x="497.3" y="298.7" width="0.6" height="1.2" fill="#3e3e3e"/><rect x="500.5" y="298.7" width="0.6" height="1.2" fill="#3e3e3e"/><rect x="503.6" y="298.7" width="0.6" height="1.2" fill="#3e3e3e"/><rect x="506.8" y="298.7" width="0.6" height="1.2" fill="#3e3e3e"/><rect x="510.0" y="298.7" width="0.6" height="1.2" fill="#3e3e3e"/><rect x="513.2" y="298.7" width="0.6" height="1.2" fill="#3e3e3e"/><rect x="516.4" y="298.7" width="0.6" height="1.2" fill="#3e3e3e"/><rect x="519.6" y="298.7" width="0.6" height="1.2" fill="#3e3e3e"/><rect x="522.8" y="296.3" width="0.6" height="3.6" fill="#484848"/><rect x="526.0" y="298.7" width="0.6" height="1.2" fill="#3e3e3e"/><rect x="529.2" y="298.7" width="0.6" height="1.2" fill="#3e3e3e"/><rect x="532.4" y="298.7" width="0.6" height="1.2" fill="#3e3e3e"/><rect x="535.6" y="298.7" width="0.6" height="1.2" fill="#3e3e3e"/><rect x="538.8" y="298.7" width="0.6" height="1.2" fill="#3e3e3e"/><rect x="542.0" y="298.7" width="0.6" height="1.2" fill="#3e3e3e"/><rect x="545.2" y="298.7" width="0.6" height="1.2" fill="#3e3e3e"/><rect x="548.3" y="298.7" width="0.6" height="1.2" fill="#3e3e3e"/><rect x="551.5" y="298.7" width="0.6" height="1.2" fill="#3e3e3e"/><rect x="554.7" y="298.7" width="0.6" height="1.2" fill="#3e3e3e"/><rect x="557.9" y="298.7" width="0.6" height="1.2" fill="#3e3e3e"/><rect x="561.1" y="298.7" width="0.6" height="1.2" fill="#3e3e3e"/><rect x="564.3" y="298.7" width="0.6" height="1.2" fill="#3e3e3e"/><rect x="567.5" y="298.7" width="0.6" height="1.2" fill="#3e3e3e"/><rect x="570.7" y="296.3" width="0.6" height="3.6" fill="#484848"/><rect x="573.9" y="298.7" width="0.6" height="1.2" fill="#3e3e3e"/><rect x="577.1" y="298.7" width="0.6" height="1.2" fill="#3e3e3e"/><rect x="580.3" y="298.7" width="0.6" height="1.2" fill="#3e3e3e"/><rect x="583.5" y="298.7" width="0.6" height="1.2" fill="#3e3e3e"/><rect x="586.7" y="298.7" width="0.6" height="1.2" fill="#3e3e3e"/><rect x="589.9" y="298.7" width="0.6" height="1.2" fill="#3e3e3e"/><rect x="593.1" y="298.7" width="0.6" height="1.2" fill="#3e3e3e"/><rect x="596.2" y="298.7" width="0.6" height="1.2" fill="#3e3e3e"/><rect x="599.4" y="298.7" width="0.6" height="1.2" fill="#3e3e3e"/><rect x="602.6" y="298.7" width="0.6" height="1.2" fill="#3e3e3e"/><rect x="605.8" y="298.7" width="0.6" height="1.2" fill="#3e3e3e"/><rect x="609.0" y="298.7" width="0.6" height="1.2" fill="#3e3e3e"/><rect x="612.2" y="298.7" width="0.6" height="1.2" fill="#3e3e3e"/><rect x="615.4" y="298.7" width="0.6" height="1.2" fill="#3e3e3e"/><rect x="618.6" y="296.3" width="0.6" height="3.6" fill="#484848"/><rect x="621.8" y="298.7" width="0.6" height="1.2" fill="#3e3e3e"/><rect x="625.0" y="298.7" width="0.6" height="1.2" fill="#3e3e3e"/><rect x="628.2" y="298.7" width="0.6" height="1.2" fill="#3e3e3e"/><rect x="631.4" y="298.7" width="0.6" height="1.2" fill="#3e3e3e"/><rect x="634.6" y="298.7" width="0.6" height="1.2" fill="#3e3e3e"/><rect x="637.8" y="298.7" width="0.6" height="1.2" fill="#3e3e3e"/><rect x="640.9" y="298.7" width="0.6" height="1.2" fill="#3e3e3e"/><rect x="644.1" y="298.7" width="0.6" height="1.2" fill="#3e3e3e"/><rect x="647.3" y="298.7" width="0.6" height="1.2" fill="#3e3e3e"/><rect x="650.5" y="298.7" width="0.6" height="1.2" fill="#3e3e3e"/><rect x="653.7" y="298.7" width="0.6" height="1.2" fill="#3e3e3e"/><rect x="656.9" y="298.7" width="0.6" height="1.2" fill="#3e3e3e"/><rect x="660.1" y="298.7" width="0.6" height="1.2" fill="#3e3e3e"/><rect x="663.3" y="298.7" width="0.6" height="1.2" fill="#3e3e3e"/><rect x="666.5" y="296.3" width="0.6" height="3.6" fill="#484848"/><rect x="669.7" y="298.7" width="0.6" height="1.2" fill="#3e3e3e"/><rect x="672.9" y="298.7" width="0.6" height="1.2" fill="#3e3e3e"/><rect x="676.1" y="298.7" width="0.6" height="1.2" fill="#3e3e3e"/><rect x="679.3" y="298.7" width="0.6" height="1.2" fill="#3e3e3e"/><rect x="682.5" y="298.7" width="0.6" height="1.2" fill="#3e3e3e"/><rect x="685.6" y="298.7" width="0.6" height="1.2" fill="#3e3e3e"/><rect x="688.8" y="298.7" width="0.6" height="1.2" fill="#3e3e3e"/><rect x="692.0" y="298.7" width="0.6" height="1.2" fill="#3e3e3e"/><rect x="695.2" y="298.7" width="0.6" height="1.2" fill="#3e3e3e"/><rect x="698.4" y="298.7" width="0.6" height="1.2" fill="#3e3e3e"/><rect x="701.6" y="298.7" width="0.6" height="1.2" fill="#3e3e3e"/><rect x="704.8" y="298.7" width="0.6" height="1.2" fill="#3e3e3e"/><rect x="708.0" y="298.7" width="0.6" height="1.2" fill="#3e3e3e"/><rect x="711.2" y="298.7" width="0.6" height="1.2" fill="#3e3e3e"/><rect x="714.4" y="296.3" width="0.6" height="3.6" fill="#484848"/><rect x="717.6" y="298.7" width="0.6" height="1.2" fill="#3e3e3e"/><rect x="720.8" y="298.7" width="0.6" height="1.2" fill="#3e3e3e"/><rect x="724.0" y="298.7" width="0.6" height="1.2" fill="#3e3e3e"/><rect x="727.2" y="298.7" width="0.6" height="1.2" fill="#3e3e3e"/><rect x="730.4" y="298.7" width="0.6" height="1.2" fill="#3e3e3e"/><rect x="733.5" y="298.7" width="0.6" height="1.2" fill="#3e3e3e"/><rect x="736.7" y="298.7" width="0.6" height="1.2" fill="#3e3e3e"/><rect x="739.9" y="298.7" width="0.6" height="1.2" fill="#3e3e3e"/><rect x="743.1" y="298.7" width="0.6" height="1.2" fill="#3e3e3e"/><rect x="746.3" y="298.7" width="0.6" height="1.2" fill="#3e3e3e"/><rect x="749.5" y="298.7" width="0.6" height="1.2" fill="#3e3e3e"/><rect x="752.7" y="298.7" width="0.6" height="1.2" fill="#3e3e3e"/><rect x="755.9" y="298.7" width="0.6" height="1.2" fill="#3e3e3e"/><rect x="759.1" y="298.7" width="0.6" height="1.2" fill="#3e3e3e"/><rect x="762.3" y="296.3" width="0.6" height="3.6" fill="#484848"/><rect x="765.5" y="298.7" width="0.6" height="1.2" fill="#3e3e3e"/><rect x="768.7" y="298.7" width="0.6" height="1.2" fill="#3e3e3e"/><rect x="771.9" y="298.7" width="0.6" height="1.2" fill="#3e3e3e"/><rect x="775.1" y="298.7" width="0.6" height="1.2" fill="#3e3e3e"/><rect x="778.2" y="298.7" width="0.6" height="1.2" fill="#3e3e3e"/><rect x="781.4" y="298.7" width="0.6" height="1.2" fill="#3e3e3e"/><rect x="784.6" y="298.7" width="0.6" height="1.2" fill="#3e3e3e"/><rect x="787.8" y="298.7" width="0.6" height="1.2" fill="#3e3e3e"/><rect x="791.0" y="298.7" width="0.6" height="1.2" fill="#3e3e3e"/><rect x="794.2" y="298.7" width="0.6" height="1.2" fill="#3e3e3e"/><rect x="797.4" y="298.7" width="0.6" height="1.2" fill="#3e3e3e"/><rect x="800.6" y="298.7" width="0.6" height="1.2" fill="#3e3e3e"/><rect x="803.8" y="298.7" width="0.6" height="1.2" fill="#3e3e3e"/><rect x="807.0" y="298.7" width="0.6" height="1.2" fill="#3e3e3e"/><rect x="810.2" y="296.3" width="0.6" height="3.6" fill="#484848"/><rect x="813.4" y="298.7" width="0.6" height="1.2" fill="#3e3e3e"/><rect x="816.6" y="298.7" width="0.6" height="1.2" fill="#3e3e3e"/><rect x="819.8" y="298.7" width="0.6" height="1.2" fill="#3e3e3e"/><rect x="822.9" y="298.7" width="0.6" height="1.2" fill="#3e3e3e"/></svg>
<div style="left:332px;top:300.3px;width:495px;height:5.7px;background:#1a1a1a;"></div>
<div style="left:333px;top:301.2px;width:5px;height:4.2px;background:#303030;"></div>
<div style="left:821px;top:301.2px;width:5px;height:4.2px;background:#303030;"></div>
<svg style="left:581px;top:294px;" width="8" height="7" viewBox="0 0 8 7"><path d="M1.7 0.9 H6 V3.4 L5 5.6 H2.7 L1.7 3.4 Z" fill="#2f98e2"/></svg>
<svg style="left:0px;top:0px;" width="980" height="320" viewBox="0 0 980 320"><path d="M507 310.5 h4 v2.4 l-2 2 l-2 -2 z" fill="#b0b0b0"/><path d="M524.3 310.4 q-1 0 -1 1 v0.8 l-0.7 0.5 l0.7 0.5 v0.8 q0 1 1 1" stroke="#b0b0b0" stroke-width="0.6" fill="none"/><path d="M534.2 310.4 q1 0 1 1 v0.8 l0.7 0.5 l-0.7 0.5 v0.8 q0 1 -1 1" stroke="#b0b0b0" stroke-width="0.6" fill="none"/><path d="M550.3 310.5 v4.4 M555.5 312.7 h-3.5 M553.6 311 l-1.8 1.7 l1.8 1.7 z" stroke="#b0b0b0" stroke-width="0.7" fill="#b0b0b0"/><path d="M566.2 311 l-2.6 1.8 l2.6 1.8 z M567.3 310.7 v4.2" stroke="#b0b0b0" stroke-width="0.7" fill="#b0b0b0"/><path d="M577.3 310.2 l4 2.6 l-4 2.6 z" fill="#d8d8d8"/><path d="M591.3 310.7 v4.2 M592.4 311 l2.6 1.8 l-2.6 1.8 z" stroke="#b0b0b0" stroke-width="0.7" fill="#b0b0b0"/><path d="M607.7 310.5 v4.4 M602.5 312.7 h3.5 M604.4 311 l1.8 1.7 l-1.8 1.7 z" stroke="#b0b0b0" stroke-width="0.7" fill="#b0b0b0"/><path d="M619.3 312.8 h2.4 v2 h-2.4 z M622.6 312.8 h2.4 v2 h-2.4 z M620.5 312.6 v-1.6 h3.3 v1.6" stroke="#b0b0b0" stroke-width="0.6" fill="#b0b0b0"/><path d="M632.3 312.8 h2.4 v2 h-2.4 z M635.6 312.8 h2.4 v2 h-2.4 z M633.5 312.6 v-1.6 h3.3 v1.6" stroke="#b0b0b0" stroke-width="0.6" fill="#b0b0b0"/><path d="M646 311.4 h1.2 l0.5 -0.7 h1.8 l0.5 0.7 h1.2 v3.5 h-5.2 z" fill="#b0b0b0"/><circle cx="648.6" cy="313.1" r="0.9" fill="#1e1e1e"/><path d="M816.8 313 h4 M818.8 311 v4" stroke="#c8c8c8" stroke-width="0.9"/></svg>
<svg style="left:0px;top:0px;" width="980" height="320" viewBox="0 0 980 320"><defs><linearGradient id="j1" x1="0" y1="0" x2="1" y2="0"><stop offset="0" stop-color="#c43a72"/><stop offset="0.2" stop-color="#d9548b"/><stop offset="0.42" stop-color="#cc4079"/><stop offset="0.6" stop-color="#d3477f"/><stop offset="1" stop-color="#c53a71"/></linearGradient>
<linearGradient id="j2" x1="0" y1="0" x2="1" y2="0"><stop offset="0" stop-color="#c43a72"/><stop offset="0.45" stop-color="#d74b85"/><stop offset="1" stop-color="#c93e76"/></linearGradient>
<filter id="jb"><feGaussianBlur stdDeviation="0.55"/></filter></defs>
<g filter="url(#jb)">
<path d="M628.4 104.9 L620 107.5 L608.9 112.4 L598.4 117.5 L593.4 125 L591.5 140 L591 160 L591 180 L588.5 205 L586.8 222 L585.8 232.2 L588 240 L591.8 246.5 L596 251.5 L600 248.5 L605.3 245.7 L610 244.5 L614.6 243 L616.5 247 L619 252 L625 248.5 L632.2 246.5 L640 248.5 L647.7 249.9 L647.5 240 L647 230.5 L644.9 201.9 L642.3 180 L637.4 163.9 L631.4 136.9 L626.9 119 Z" fill="url(#j1)"/>
<path d="M658.3 111.5 L668.8 119 L680.8 128 L688.3 139.9 L690 155 L691.3 169.9 L692.8 180 L696.2 196.8 L700.4 222 L703.8 247.3 L705.2 254 L703 264.2 L691.2 262.5 L678.5 258.3 L676 238.9 L671.8 213.7 L668.4 180 L670.3 154.9 L667.3 128 Z" fill="url(#j2)"/>
<path d="M610.6 226 L609 237 L614.4 243 Z" fill="#a6a6a6"/>
<path d="M606.5 113.5 L612.5 124 L615.5 148 L613 185 L610.5 215 L610.5 228" stroke="#a8969f" stroke-width="2.1" fill="none" opacity="0.92"/>
<path d="M617.5 109.5 L625 128 L631 152 L636 172" stroke="#b08498" stroke-width="1.4" fill="none" opacity="0.8"/>
<path d="M672.5 121 L677.5 140 L676 158 L671.5 174 L669.8 190" stroke="#a8969f" stroke-width="2.1" fill="none" opacity="0.95"/>
<path d="M677 125 L681.5 142 L680 156" stroke="#b08498" stroke-width="1.1" fill="none" opacity="0.8"/>
<path d="M682 130 L687 152 L691 185 L697 225 L700.5 250" stroke="#b22c64" stroke-width="1.4" fill="none" opacity="0.55"/>
<path d="M596.5 128 L595 180 L591.5 228" stroke="#e2679a" stroke-width="2.4" fill="none" opacity="0.45"/>
<path d="M621 150 L631 200 L639 246" stroke="#b52e66" stroke-width="2.6" fill="none" opacity="0.4"/>
<path d="M628 140 L640 200 L644 240" stroke="#db5590" stroke-width="1.8" fill="none" opacity="0.35"/>
<path d="M676 190 L681 230 L686 258" stroke="#e0608f" stroke-width="2.4" fill="none" opacity="0.4"/>
<path d="M586.3 234 L598 240.5 L610 236.5" stroke="#ad2a5f" stroke-width="1" fill="none" opacity="0.6"/>
<path d="M699 246 L704.5 249.5" stroke="#ad2a5f" stroke-width="1" fill="none" opacity="0.6"/>
</g></svg>
<div style="left:1px;top:321.3px;width:258.5px;height:204.7px;background:#1e1e1e;"></div>
<div style="left:1px;top:321.3px;width:258.5px;height:11.5px;background:#191919;"></div>
<div style="left:36px;top:321.3px;width:53.5px;height:11.5px;background:#1e1e1e;"></div>
<div class="t" style="left:5px;top:326.80px;font-size:4.5px;line-height:5.40px;color:#7a7a7a;">Bin: Video</div>
<div class="t" style="left:41px;top:326.80px;font-size:4.5px;line-height:5.40px;color:#dcdcdc;letter-spacing:-0.05px;">Project: HSL DEMO</div>
<svg style="left:83.3px;top:326.9px" width="3" height="4" viewBox="0 0 3 4"><path d="M0.2 0.7 h2.2 M0.2 2 h2.2 M0.2 3.3 h2.2" stroke="#8a8a8a" stroke-width="0.6"/></svg>
<svg style="left:3.5px;top:337.5px;" width="7" height="6" viewBox="0 0 7 6"><path d="M1 1 h1.8 l0.5 0.7 h2.4 v3 h-4.7 z" fill="#909090"/></svg>
<div class="t" style="left:15px;top:338.30px;font-size:4.5px;line-height:5.40px;color:#9a9a9a;letter-spacing:-0.05px;">HSL DEMO.prproj</div>
<div class="t" style="right:723px;top:338.30px;font-size:4.5px;line-height:5.40px;color:#8a8a8a;text-align:right;letter-spacing:-0.05px;">1 Item</div>
<div style="left:3px;top:344.3px;width:80px;height:7.6px;background:#171717;"></div>
<svg style="left:2.5px;top:344.5px;" width="7" height="7" viewBox="0 0 7 7"><circle cx="3.6" cy="3" r="1.5" stroke="#a0a0a0" stroke-width="0.7" fill="none"/><path d="M2.6 4.1 L1.2 5.8" stroke="#a0a0a0" stroke-width="0.8"/></svg>
<svg style="left:87.5px;top:345px;" width="8" height="7" viewBox="0 0 8 7"><path d="M1 1 h2 l0.5 0.7 h2.6 v3.6 h-5.1 z" fill="#c0c0c0"/><path d="M4.6 2.6 v2 M3.6 3.6 h2" stroke="#1e1e1e" stroke-width="0.5"/></svg>
<div style="left:1px;top:353.3px;width:256px;height:8.6px;background:#1d1d1d;"></div>
<div class="t" style="left:14.3px;top:355.10px;font-size:4.5px;line-height:5.40px;color:#8c8c8c;">Name</div>
<div class="t" style="left:91px;top:355.10px;font-size:4.5px;line-height:5.40px;color:#8c8c8c;">Frame Rate</div>
<div class="t" style="left:129px;top:355.10px;font-size:4.5px;line-height:5.40px;color:#8c8c8c;">Media Start</div>
<div class="t" style="left:167.5px;top:355.10px;font-size:4.5px;line-height:5.40px;color:#8c8c8c;">Media End</div>
<div class="t" style="left:205.7px;top:355.10px;font-size:4.5px;line-height:5.40px;color:#8c8c8c;">Media Duration</div>
<div class="t" style="left:244px;top:355.10px;font-size:4.5px;line-height:5.40px;color:#8c8c8c;">Video</div>
<svg style="left:27.5px;top:354.3px;" width="7" height="6" viewBox="0 0 7 6"><path d="M1.3 4.2 L3.3 2 L5.3 4.2" stroke="#c8c8c8" stroke-width="0.9" fill="none"/></svg>
<div style="left:5px;top:365.8px;width:5px;height:5.2px;background:#f09a28;"></div>
<svg style="left:15.5px;top:365.5px;" width="6" height="7" viewBox="0 0 6 7"><path d="M2 1.6 L4 3.2 L2 4.8 Z" fill="#c8c8c8"/></svg>
<svg style="left:26.5px;top:365px;" width="9" height="7" viewBox="0 0 9 7"><path d="M1.2 1.2 h2 l0.6 0.8 h2.8 v3.6 h-5.4 z" fill="#c4c4c4"/></svg>
<div class="t" style="left:41px;top:365.74px;font-size:4.6px;line-height:5.52px;color:#9a9a9a;">Z_Make It Takehiro</div>
<div style="left:251px;top:362px;width:6.2px;height:149px;background:#171717;"></div>
<div style="left:3px;top:511.6px;width:81px;height:4.8px;background:#202020;"></div>
<div style="left:84px;top:511.6px;width:167px;height:4.8px;background:#151515;"></div>
<div style="left:251px;top:511.6px;width:6.2px;height:4.8px;background:#1a1a1a;"></div>
<svg style="left:0px;top:0.4px;" width="262" height="535" viewBox="0 0 262 535"><path d="M3 519 h1.6 v1.4 h-1.6z M3 521.6 h1.6 v1.4 h-1.6z M5.4 519 h3 v1.4 h-3z M5.4 521.6 h3 v1.4 h-3z" fill="#1f7ab8"/><path d="M13 518.8 h4 v3 h-4z M13.4 522.3 h1.2 v1 h-1.2z M15.4 522.3 h1.2 v1 h-1.2z" fill="#b8b8b8"/><path d="M22.5 522.3 l1.3 -1.8 l1.3 1.8z" fill="#9a9a9a"/><rect x="32" y="521" width="32" height="0.6" fill="#101010"/><path d="M46.3 520 l1.4 -1.4 l1.4 1.4 v2.8 h-2.8z" fill="#a8a8a8"/><path d="M68.5 522.8 l2 -3 l1.2 1.4 l1 -1.2 l2 2.8z" fill="#9a9a9a"/><path d="M81.3 518.8 l1 1.2 h-2z M81.3 523.6 l1 -1.2 h-2z" fill="#5a5a5a"/><path d="M188 519.2 h1.2 v1.2 h-1.2z M190 519.2 h3 v1.2 h-3z M188 521.6 h1.2 v1.2 h-1.2z M190 521.6 h3 v1.2 h-3z" fill="#4a4a4a"/><circle cx="199.3" cy="520.3" r="1.5" stroke="#b0b0b0" stroke-width="0.7" fill="none"/><path d="M198.3 521.4 L196.8 523.2" stroke="#b0b0b0" stroke-width="0.8"/><path d="M206.5 518.8 h1.8 l0.5 0.7 h2.4 v3.6 h-4.7z" fill="#c0c0c0"/><path d="M216 518.8 h4 v4 l-1 1 h-3z" fill="#c0c0c0"/><path d="M225.6 519.6 h3.2 v3.8 h-3.2z M225 519 h4.4 M226.5 518.5 h1.4" stroke="#4a4a4a" stroke-width="0.6" fill="none"/><path d="M238.5 519 l3.4 3.6 M241.9 520.8 v1.8 h-1.8" stroke="#5a5a5a" stroke-width="0.7" fill="none"/><path d="M249.3 522.8 l3.4 -3.6 M250.9 519.2 h1.8 v1.8" stroke="#9a9a9a" stroke-width="0.7" fill="none"/></svg>
<svg style="left:1px;top:527px;" width="10" height="7" viewBox="0 0 10 7"><ellipse cx="3" cy="3.5" rx="2" ry="1.4" stroke="#a0a0a0" stroke-width="0.6" fill="none"/><ellipse cx="4.8" cy="3.5" rx="2" ry="1.4" stroke="#a0a0a0" stroke-width="0.6" fill="none"/></svg>
<div style="left:261.3px;top:321.3px;width:12.7px;height:204.7px;background:#1e1e1e;"></div>
<svg style="left:0px;top:0px;" width="280" height="535" viewBox="0 0 280 535"><g transform="translate(-0.1,-0.7)"><path d="M266 328.8 v4.6 l1.1 -1 l0.9 1.8 l0.7 -0.3 l-0.9 -1.8 h1.5z" fill="none" stroke="#b4b4b4" stroke-width="0.7"/><path d="M264.6 337.4 h2.6 v3.2 h-2.6 M266 339 h3.6 M268.4 337.8 l1.3 1.2 l-1.3 1.2z" stroke="#b4b4b4" stroke-width="0.8" fill="none"/><path d="M270 345.4 h-2.6 v3.2 h2.6 M268.6 347 h-3.6 M266.2 345.8 l-1.3 1.2 l1.3 1.2z" stroke="#b4b4b4" stroke-width="0.8" fill="none"/><path d="M267.3 352.8 v4.4 M264.6 355 h5.4 M265.6 354 l-1 1 l1 1z M269 354 l1 1 l-1 1z" stroke="#b4b4b4" stroke-width="0.8" fill="#b4b4b4"/><path d="M266.6 360.8 v4.4 M268 360.8 v4.4 M264.8 362.2 h5 M264.8 363.8 h5" stroke="#b4b4b4" stroke-width="0.75" fill="none"/><path d="M265 369.2 h2 v3.8 M268.2 372.4 h1.8 M268.6 371.6 l-0.8 0.8 l0.8 0.8" stroke="#b4b4b4" stroke-width="0.8" fill="none"/><path d="M265 378.8 l2 -2 l2.8 2.8 l-2 2z" fill="#b4b4b4"/><path d="M264.6 385 v4 M270 385 v4 M265.4 387 h3.8 M266.4 386.2 l-0.9 0.8 l0.9 0.8 M268.3 386.2 l0.9 0.8 l-0.9 0.8" stroke="#b4b4b4" stroke-width="0.75" fill="none"/><circle cx="267.3" cy="395" r="1.2" stroke="#b4b4b4" stroke-width="0.8" fill="none"/><path d="M264.4 395 h1.6 M268.6 395 h1.6 M264.9 394.3 l-0.7 0.7 l0.7 0.7 M269.7 394.3 l0.7 0.7 l-0.7 0.7" stroke="#b4b4b4" stroke-width="0.75" fill="none"/><path d="M265 405.4 l0.6 -2 l2.6 -2.6 l1.4 1.4 l-2.6 2.6z" fill="#b4b4b4"/><path d="M265.4 411.2 q0 -2.6 0.8 -2.4 l0.2 1 l0.3 -1.6 q0.5 -0.3 0.6 0 l0.1 1.4 l0.3 -1.5 q0.5 -0.2 0.6 0.1 l0 1.6 l0.4 -1 q0.6 0 0.5 0.4 l-0.3 2.4 q-0.2 1.6 -1.2 1.8 h-1.2 q-0.9 -0.6 -1.1 -2.2z" fill="#b4b4b4"/><circle cx="266.9" cy="418.3" r="1.5" stroke="#2d8ceb" stroke-width="0.8" fill="none"/><path d="M268 419.5 L269.8 421.4" stroke="#2d8ceb" stroke-width="0.9"/></g></svg>
<div style="left:276px;top:321.3px;width:519.3px;height:204.7px;background:#1e1e1e;"></div>
<div class="t" style="left:280px;top:327.10px;font-size:4.5px;line-height:5.40px;color:#8a8a8a;">×</div>
<div class="t" style="left:286px;top:327.04px;font-size:4.6px;line-height:5.52px;color:#d0d0d0;">V1-0009_A001_C010_06088U</div>
<svg style="left:353.3px;top:327.2px" width="3" height="4" viewBox="0 0 3 4"><path d="M0.2 0.7 h2.2 M0.2 2 h2.2 M0.2 3.3 h2.2" stroke="#7a7a7a" stroke-width="0.6"/></svg>
<div class="t" style="left:278.8px;top:336.76px;font-size:6.4px;line-height:7.68px;color:#36a0e6;letter-spacing:0.14px;text-shadow:0 0 0.4px #36a0e6">00:02:38:18</div>
<svg style="left:0px;top:0px;" width="400" height="400" viewBox="0 0 400 400"><path d="M280.5 347 l3.4 4 M281 350.6 l2.4 -3.4 M280.4 348.6 h3.6" stroke="#2d8ceb" stroke-width="0.7" fill="none"/><path d="M296.2 347.6 a1.9 1.9 0 1 0 0 3.2" stroke="#2d8ceb" stroke-width="1" fill="none"/><path d="M306 347.6 h4.6 v3.6 h-4.6z" fill="#2d8ceb"/><path d="M306.8 346.8 v1.6 M309.8 346.8 v1.6" stroke="#2d8ceb" stroke-width="0.6"/><path d="M319.5 347.4 h3 v2 l-1.5 1.5 l-1.5 -1.5z" fill="#b8b8b8"/></svg>
<svg style="left:330.9px;top:346.4px" width="7" height="7" viewBox="0 0 7 7"><path d="M2.6 2.6 L5.7 5.7" stroke="#c4c4c4" stroke-width="1.25" stroke-linecap="round"/><circle cx="2.1" cy="2.1" r="1.55" fill="#c4c4c4"/><path d="M-0.2 0.4 L1.9 1.5 L1.5 1.9 L0.4 -0.2z" fill="#1e1e1e"/><path d="M0.2 0.2 L2.3 1.2 L1.2 2.3z" fill="#1e1e1e"/></svg>
<svg style="left:0px;top:0px;" width="980" height="360" viewBox="0 0 980 360"><rect x="346.5" y="350.7" width="0.6" height="1.3" fill="#4c4c4c"/><rect x="349.5" y="350.7" width="0.6" height="1.3" fill="#4c4c4c"/><rect x="352.5" y="350.7" width="0.6" height="1.3" fill="#4c4c4c"/><rect x="355.5" y="350.7" width="0.6" height="1.3" fill="#4c4c4c"/><rect x="358.5" y="350.7" width="0.6" height="1.3" fill="#4c4c4c"/><rect x="361.4" y="350.7" width="0.6" height="1.3" fill="#4c4c4c"/><rect x="364.4" y="350.7" width="0.6" height="1.3" fill="#4c4c4c"/><rect x="367.4" y="350.7" width="0.6" height="1.3" fill="#4c4c4c"/><rect x="370.4" y="350.7" width="0.6" height="1.3" fill="#4c4c4c"/><rect x="373.4" y="350.7" width="0.6" height="1.3" fill="#4c4c4c"/><rect x="376.4" y="348.2" width="0.6" height="3.8" fill="#4c4c4c"/><rect x="379.4" y="350.7" width="0.6" height="1.3" fill="#4c4c4c"/><rect x="382.4" y="350.7" width="0.6" height="1.3" fill="#4c4c4c"/><rect x="385.4" y="350.7" width="0.6" height="1.3" fill="#4c4c4c"/><rect x="388.4" y="350.7" width="0.6" height="1.3" fill="#4c4c4c"/><rect x="391.4" y="350.7" width="0.6" height="1.3" fill="#4c4c4c"/><rect x="394.4" y="350.7" width="0.6" height="1.3" fill="#4c4c4c"/><rect x="397.4" y="350.7" width="0.6" height="1.3" fill="#4c4c4c"/><rect x="400.4" y="350.7" width="0.6" height="1.3" fill="#4c4c4c"/><rect x="403.4" y="350.7" width="0.6" height="1.3" fill="#4c4c4c"/><rect x="406.4" y="350.7" width="0.6" height="1.3" fill="#4c4c4c"/><rect x="409.3" y="350.7" width="0.6" height="1.3" fill="#4c4c4c"/><rect x="412.3" y="348.2" width="0.6" height="3.8" fill="#4c4c4c"/><rect x="415.3" y="350.7" width="0.6" height="1.3" fill="#4c4c4c"/><rect x="418.3" y="350.7" width="0.6" height="1.3" fill="#4c4c4c"/><rect x="421.3" y="350.7" width="0.6" height="1.3" fill="#4c4c4c"/><rect x="424.3" y="350.7" width="0.6" height="1.3" fill="#4c4c4c"/><rect x="427.3" y="350.7" width="0.6" height="1.3" fill="#4c4c4c"/><rect x="430.3" y="350.7" width="0.6" height="1.3" fill="#4c4c4c"/><rect x="433.3" y="350.7" width="0.6" height="1.3" fill="#4c4c4c"/><rect x="436.3" y="350.7" width="0.6" height="1.3" fill="#4c4c4c"/><rect x="439.3" y="350.7" width="0.6" height="1.3" fill="#4c4c4c"/><rect x="442.3" y="350.7" width="0.6" height="1.3" fill="#4c4c4c"/><rect x="445.3" y="350.7" width="0.6" height="1.3" fill="#4c4c4c"/><rect x="448.3" y="348.2" width="0.6" height="3.8" fill="#4c4c4c"/><rect x="451.3" y="350.7" width="0.6" height="1.3" fill="#4c4c4c"/><rect x="454.3" y="350.7" width="0.6" height="1.3" fill="#4c4c4c"/><rect x="457.3" y="350.7" width="0.6" height="1.3" fill="#4c4c4c"/><rect x="460.2" y="350.7" width="0.6" height="1.3" fill="#4c4c4c"/><rect x="463.2" y="350.7" width="0.6" height="1.3" fill="#4c4c4c"/><rect x="466.2" y="350.7" width="0.6" height="1.3" fill="#4c4c4c"/><rect x="469.2" y="350.7" width="0.6" height="1.3" fill="#4c4c4c"/><rect x="472.2" y="350.7" width="0.6" height="1.3" fill="#4c4c4c"/><rect x="475.2" y="350.7" width="0.6" height="1.3" fill="#4c4c4c"/><rect x="478.2" y="350.7" width="0.6" height="1.3" fill="#4c4c4c"/><rect x="481.2" y="350.7" width="0.6" height="1.3" fill="#4c4c4c"/><rect x="484.2" y="348.2" width="0.6" height="3.8" fill="#4c4c4c"/><rect x="487.2" y="350.7" width="0.6" height="1.3" fill="#4c4c4c"/><rect x="490.2" y="350.7" width="0.6" height="1.3" fill="#4c4c4c"/><rect x="493.2" y="350.7" width="0.6" height="1.3" fill="#4c4c4c"/><rect x="496.2" y="350.7" width="0.6" height="1.3" fill="#4c4c4c"/><rect x="499.2" y="350.7" width="0.6" height="1.3" fill="#4c4c4c"/><rect x="502.2" y="350.7" width="0.6" height="1.3" fill="#4c4c4c"/><rect x="505.2" y="350.7" width="0.6" height="1.3" fill="#4c4c4c"/><rect x="508.2" y="350.7" width="0.6" height="1.3" fill="#4c4c4c"/><rect x="511.1" y="350.7" width="0.6" height="1.3" fill="#4c4c4c"/><rect x="514.1" y="350.7" width="0.6" height="1.3" fill="#4c4c4c"/><rect x="517.1" y="350.7" width="0.6" height="1.3" fill="#4c4c4c"/><rect x="520.1" y="348.2" width="0.6" height="3.8" fill="#4c4c4c"/><rect x="523.1" y="350.7" width="0.6" height="1.3" fill="#4c4c4c"/><rect x="526.1" y="350.7" width="0.6" height="1.3" fill="#4c4c4c"/><rect x="529.1" y="350.7" width="0.6" height="1.3" fill="#4c4c4c"/><rect x="532.1" y="350.7" width="0.6" height="1.3" fill="#4c4c4c"/><rect x="535.1" y="350.7" width="0.6" height="1.3" fill="#4c4c4c"/><rect x="538.1" y="350.7" width="0.6" height="1.3" fill="#4c4c4c"/><rect x="541.1" y="350.7" width="0.6" height="1.3" fill="#4c4c4c"/><rect x="544.1" y="350.7" width="0.6" height="1.3" fill="#4c4c4c"/><rect x="547.1" y="350.7" width="0.6" height="1.3" fill="#4c4c4c"/><rect x="550.1" y="350.7" width="0.6" height="1.3" fill="#4c4c4c"/><rect x="553.1" y="350.7" width="0.6" height="1.3" fill="#4c4c4c"/><rect x="556.1" y="348.2" width="0.6" height="3.8" fill="#4c4c4c"/><rect x="559.1" y="350.7" width="0.6" height="1.3" fill="#4c4c4c"/><rect x="562.0" y="350.7" width="0.6" height="1.3" fill="#4c4c4c"/><rect x="565.0" y="350.7" width="0.6" height="1.3" fill="#4c4c4c"/><rect x="568.0" y="350.7" width="0.6" height="1.3" fill="#4c4c4c"/><rect x="571.0" y="350.7" width="0.6" height="1.3" fill="#4c4c4c"/><rect x="574.0" y="350.7" width="0.6" height="1.3" fill="#4c4c4c"/><rect x="577.0" y="350.7" width="0.6" height="1.3" fill="#4c4c4c"/><rect x="580.0" y="350.7" width="0.6" height="1.3" fill="#4c4c4c"/><rect x="583.0" y="350.7" width="0.6" height="1.3" fill="#4c4c4c"/><rect x="586.0" y="350.7" width="0.6" height="1.3" fill="#4c4c4c"/><rect x="589.0" y="350.7" width="0.6" height="1.3" fill="#4c4c4c"/><rect x="592.0" y="348.2" width="0.6" height="3.8" fill="#4c4c4c"/><rect x="595.0" y="350.7" width="0.6" height="1.3" fill="#4c4c4c"/><rect x="598.0" y="350.7" width="0.6" height="1.3" fill="#4c4c4c"/><rect x="601.0" y="350.7" width="0.6" height="1.3" fill="#4c4c4c"/><rect x="604.0" y="350.7" width="0.6" height="1.3" fill="#4c4c4c"/><rect x="607.0" y="350.7" width="0.6" height="1.3" fill="#4c4c4c"/><rect x="609.9" y="350.7" width="0.6" height="1.3" fill="#4c4c4c"/><rect x="612.9" y="350.7" width="0.6" height="1.3" fill="#4c4c4c"/><rect x="615.9" y="350.7" width="0.6" height="1.3" fill="#4c4c4c"/><rect x="618.9" y="350.7" width="0.6" height="1.3" fill="#4c4c4c"/><rect x="621.9" y="350.7" width="0.6" height="1.3" fill="#4c4c4c"/><rect x="624.9" y="350.7" width="0.6" height="1.3" fill="#4c4c4c"/><rect x="627.9" y="348.2" width="0.6" height="3.8" fill="#4c4c4c"/><rect x="630.9" y="350.7" width="0.6" height="1.3" fill="#4c4c4c"/><rect x="633.9" y="350.7" width="0.6" height="1.3" fill="#4c4c4c"/><rect x="636.9" y="350.7" width="0.6" height="1.3" fill="#4c4c4c"/><rect x="639.9" y="350.7" width="0.6" height="1.3" fill="#4c4c4c"/><rect x="642.9" y="350.7" width="0.6" height="1.3" fill="#4c4c4c"/><rect x="645.9" y="350.7" width="0.6" height="1.3" fill="#4c4c4c"/><rect x="648.9" y="350.7" width="0.6" height="1.3" fill="#4c4c4c"/><rect x="651.9" y="350.7" width="0.6" height="1.3" fill="#4c4c4c"/><rect x="654.9" y="350.7" width="0.6" height="1.3" fill="#4c4c4c"/><rect x="657.9" y="350.7" width="0.6" height="1.3" fill="#4c4c4c"/><rect x="660.8" y="350.7" width="0.6" height="1.3" fill="#4c4c4c"/><rect x="663.8" y="348.2" width="0.6" height="3.8" fill="#4c4c4c"/><rect x="666.8" y="350.7" width="0.6" height="1.3" fill="#4c4c4c"/><rect x="669.8" y="350.7" width="0.6" height="1.3" fill="#4c4c4c"/><rect x="672.8" y="350.7" width="0.6" height="1.3" fill="#4c4c4c"/><rect x="675.8" y="350.7" width="0.6" height="1.3" fill="#4c4c4c"/><rect x="678.8" y="350.7" width="0.6" height="1.3" fill="#4c4c4c"/><rect x="681.8" y="350.7" width="0.6" height="1.3" fill="#4c4c4c"/><rect x="684.8" y="350.7" width="0.6" height="1.3" fill="#4c4c4c"/><rect x="687.8" y="350.7" width="0.6" height="1.3" fill="#4c4c4c"/><rect x="690.8" y="350.7" width="0.6" height="1.3" fill="#4c4c4c"/><rect x="693.8" y="350.7" width="0.6" height="1.3" fill="#4c4c4c"/><rect x="696.8" y="350.7" width="0.6" height="1.3" fill="#4c4c4c"/><rect x="699.8" y="348.2" width="0.6" height="3.8" fill="#4c4c4c"/><rect x="702.8" y="350.7" width="0.6" height="1.3" fill="#4c4c4c"/><rect x="705.8" y="350.7" width="0.6" height="1.3" fill="#4c4c4c"/><rect x="708.8" y="350.7" width="0.6" height="1.3" fill="#4c4c4c"/><rect x="711.7" y="350.7" width="0.6" height="1.3" fill="#4c4c4c"/><rect x="714.7" y="350.7" width="0.6" height="1.3" fill="#4c4c4c"/><rect x="717.7" y="350.7" width="0.6" height="1.3" fill="#4c4c4c"/><rect x="720.7" y="350.7" width="0.6" height="1.3" fill="#4c4c4c"/><rect x="723.7" y="350.7" width="0.6" height="1.3" fill="#4c4c4c"/><rect x="726.7" y="350.7" width="0.6" height="1.3" fill="#4c4c4c"/><rect x="729.7" y="350.7" width="0.6" height="1.3" fill="#4c4c4c"/><rect x="732.7" y="350.7" width="0.6" height="1.3" fill="#4c4c4c"/><rect x="735.7" y="348.2" width="0.6" height="3.8" fill="#4c4c4c"/><rect x="738.7" y="350.7" width="0.6" height="1.3" fill="#4c4c4c"/><rect x="741.7" y="350.7" width="0.6" height="1.3" fill="#4c4c4c"/><rect x="744.7" y="350.7" width="0.6" height="1.3" fill="#4c4c4c"/><rect x="747.7" y="350.7" width="0.6" height="1.3" fill="#4c4c4c"/><rect x="750.7" y="350.7" width="0.6" height="1.3" fill="#4c4c4c"/><rect x="753.7" y="350.7" width="0.6" height="1.3" fill="#4c4c4c"/><rect x="756.7" y="350.7" width="0.6" height="1.3" fill="#4c4c4c"/><rect x="759.6" y="350.7" width="0.6" height="1.3" fill="#4c4c4c"/><rect x="762.6" y="350.7" width="0.6" height="1.3" fill="#4c4c4c"/><rect x="765.6" y="350.7" width="0.6" height="1.3" fill="#4c4c4c"/><rect x="768.6" y="350.7" width="0.6" height="1.3" fill="#4c4c4c"/><rect x="771.6" y="348.2" width="0.6" height="3.8" fill="#4c4c4c"/><rect x="774.6" y="350.7" width="0.6" height="1.3" fill="#4c4c4c"/><rect x="777.6" y="350.7" width="0.6" height="1.3" fill="#4c4c4c"/><rect x="780.6" y="350.7" width="0.6" height="1.3" fill="#4c4c4c"/><rect x="783.6" y="350.7" width="0.6" height="1.3" fill="#4c4c4c"/><rect x="786.6" y="350.7" width="0.6" height="1.3" fill="#4c4c4c"/></svg>
<div style="left:346px;top:351.8px;width:444px;height:2.2px;background:#8e8612;"></div>
<div style="left:346px;top:354px;width:444px;height:0.8px;background:#0b0b18;"></div>
<div style="left:276px;top:372.3px;width:514px;height:0.6px;background:#171717;"></div>
<div style="left:276px;top:403.8px;width:514px;height:0.6px;background:#171717;"></div>
<div style="left:276px;top:436.3px;width:514px;height:0.6px;background:#171717;"></div>
<div style="left:276px;top:465.4px;width:514px;height:0.6px;background:#171717;"></div>
<div style="left:276px;top:493.2px;width:514px;height:0.6px;background:#171717;"></div>
<div style="left:276px;top:520px;width:514px;height:0.6px;background:#171717;"></div>
<div class="t" style="left:299.3px;top:353.20px;font-size:4.5px;line-height:5.40px;color:#5c5c5c;">V3</div>
<div class="t" style="left:299.5px;top:380.80px;font-size:4.5px;line-height:5.40px;color:#888888;">V2</div>
<div class="t" style="left:309px;top:380.80px;font-size:4.5px;line-height:5.40px;color:#888888;">Video 2</div>
<div style="left:296px;top:404.5px;width:12.2px;height:31.2px;background:#0d4a86;"></div>
<div class="t" style="left:299.8px;top:411.60px;font-size:4.5px;line-height:5.40px;color:#6fa8dc;letter-spacing:-0.10px;">V1</div>
<div class="t" style="left:309px;top:411.60px;font-size:4.5px;line-height:5.40px;color:#888888;">Video 1</div>
<div style="left:276.3px;top:437px;width:12px;height:28px;background:#0d4a86;"></div>
<div style="left:296px;top:437px;width:12.2px;height:28px;background:#0d4a86;"></div>
<div class="t" style="left:279.5px;top:443.90px;font-size:4.5px;line-height:5.40px;color:#6fa8dc;letter-spacing:-0.10px;">A1</div>
<div class="t" style="left:299.5px;top:443.90px;font-size:4.5px;line-height:5.40px;color:#6fa8dc;letter-spacing:-0.10px;">A1</div>
<div class="t" style="left:309px;top:443.90px;font-size:4.5px;line-height:5.40px;color:#888888;">Audio 1</div>
<div style="left:296px;top:466px;width:12.2px;height:27px;background:#0d4a86;"></div>
<div class="t" style="left:299.5px;top:472.10px;font-size:4.5px;line-height:5.40px;color:#6fa8dc;letter-spacing:-0.10px;">A2</div>
<div class="t" style="left:309px;top:472.10px;font-size:4.5px;line-height:5.40px;color:#888888;">Audio 2</div>
<div style="left:296px;top:493.8px;width:12.2px;height:26.4px;background:#0d4a86;"></div>
<div class="t" style="left:299.5px;top:500.40px;font-size:4.5px;line-height:5.40px;color:#6fa8dc;letter-spacing:-0.10px;">A3</div>
<div class="t" style="left:309px;top:500.40px;font-size:4.5px;line-height:5.40px;color:#888888;">Audio 3</div>
<svg style="left:0px;top:0px;" width="400" height="535" viewBox="0 0 400 535"><path d="M313.6 356.3 l-2.1 2 l2.1 2z" fill="#7c7c7c"/><circle cx="319.2" cy="358.3" r="1.2" stroke="#484848" stroke-width="0.55" fill="none"/><path d="M325 356.3 l2.1 2 l-2.1 2z" fill="#7c7c7c"/><rect x="290.3" y="383.0" width="2.8" height="2.3" fill="#cccccc"/><path d="M290.90000000000003 383.0 v-1 a0.8 0.8 0 0 1 1.6 0 v0.4" stroke="#cccccc" stroke-width="0.5" fill="none"/><rect x="310.8" y="375.6" width="3.4" height="2.8" fill="none" stroke="#bcbcbc" stroke-width="0.5"/><path d="M311.8 375.6 v2.8 M313.2 375.6 v2.8" stroke="#bcbcbc" stroke-width="0.4"/><path d="M314.6 377 h1" stroke="#bcbcbc" stroke-width="0.5"/><ellipse cx="320" cy="377" rx="2" ry="1.3" fill="none" stroke="#bcbcbc" stroke-width="0.5"/><circle cx="320" cy="377" r="0.6" fill="#bcbcbc"/><path d="M313.6 387.3 l-2.1 2 l2.1 2z" fill="#7c7c7c"/><circle cx="319.2" cy="389.3" r="1.2" stroke="#484848" stroke-width="0.55" fill="none"/><path d="M325 387.3 l2.1 2 l-2.1 2z" fill="#7c7c7c"/><rect x="290.3" y="413.7" width="2.8" height="2.3" fill="#cccccc"/><path d="M290.90000000000003 413.7 v-1 a0.8 0.8 0 0 1 1.6 0 v0.4" stroke="#cccccc" stroke-width="0.5" fill="none"/><rect x="310.8" y="406.3" width="3.4" height="2.8" fill="none" stroke="#bcbcbc" stroke-width="0.5"/><path d="M311.8 406.3 v2.8 M313.2 406.3 v2.8" stroke="#bcbcbc" stroke-width="0.4"/><path d="M314.6 407.7 h1" stroke="#bcbcbc" stroke-width="0.5"/><ellipse cx="320" cy="407.7" rx="2" ry="1.3" fill="none" stroke="#bcbcbc" stroke-width="0.5"/><circle cx="320" cy="407.7" r="0.6" fill="#bcbcbc"/><path d="M313.6 418.3 l-2.1 2 l2.1 2z" fill="#7c7c7c"/><circle cx="319.2" cy="420.3" r="1.2" stroke="#484848" stroke-width="0.55" fill="none"/><path d="M325 418.3 l2.1 2 l-2.1 2z" fill="#7c7c7c"/><rect x="290.3" y="446.0" width="2.8" height="2.3" fill="#cccccc"/><path d="M290.90000000000003 446.0 v-1 a0.8 0.8 0 0 1 1.6 0 v0.4" stroke="#cccccc" stroke-width="0.5" fill="none"/><rect x="310.8" y="438.90000000000003" width="3.4" height="2.8" fill="none" stroke="#bcbcbc" stroke-width="0.5"/><path d="M311.8 438.90000000000003 v2.8 M313.2 438.90000000000003 v2.8" stroke="#bcbcbc" stroke-width="0.4"/><path d="M314.6 440.3 h1" stroke="#bcbcbc" stroke-width="0.5"/><path d="M318 441.8 v-3 l1.2 1.6 l1.2 -1.6 v3" fill="none" stroke="#bcbcbc" stroke-width="0.55"/><path d="M327.4 439.0 h-1.6 v1.3 h1.4 v1.3 h-1.6" fill="none" stroke="#bcbcbc" stroke-width="0.5"/><rect x="332.6" y="438.3" width="1.5" height="2.8" rx="0.7" fill="#bcbcbc"/><path d="M332 440.3 a1.35 1.35 0 0 0 2.7 0 M333.35 441.7 v1" stroke="#bcbcbc" stroke-width="0.4" fill="none"/><path d="M313.6 451 l-2.1 2 l2.1 2z" fill="#7c7c7c"/><circle cx="319.2" cy="453" r="1.2" stroke="#484848" stroke-width="0.55" fill="none"/><path d="M325 451 l2.1 2 l-2.1 2z" fill="#7c7c7c"/><rect x="290.3" y="474.2" width="2.8" height="2.3" fill="#cccccc"/><path d="M290.90000000000003 474.2 v-1 a0.8 0.8 0 0 1 1.6 0 v0.4" stroke="#cccccc" stroke-width="0.5" fill="none"/><rect x="310.8" y="467.1" width="3.4" height="2.8" fill="none" stroke="#bcbcbc" stroke-width="0.5"/><path d="M311.8 467.1 v2.8 M313.2 467.1 v2.8" stroke="#bcbcbc" stroke-width="0.4"/><path d="M314.6 468.5 h1" stroke="#bcbcbc" stroke-width="0.5"/><path d="M318 470.0 v-3 l1.2 1.6 l1.2 -1.6 v3" fill="none" stroke="#bcbcbc" stroke-width="0.55"/><path d="M327.4 467.2 h-1.6 v1.3 h1.4 v1.3 h-1.6" fill="none" stroke="#bcbcbc" stroke-width="0.5"/><rect x="332.6" y="466.5" width="1.5" height="2.8" rx="0.7" fill="#bcbcbc"/><path d="M332 468.5 a1.35 1.35 0 0 0 2.7 0 M333.35 469.9 v1" stroke="#bcbcbc" stroke-width="0.4" fill="none"/><path d="M313.6 479.3 l-2.1 2 l2.1 2z" fill="#7c7c7c"/><circle cx="319.2" cy="481.3" r="1.2" stroke="#484848" stroke-width="0.55" fill="none"/><path d="M325 479.3 l2.1 2 l-2.1 2z" fill="#7c7c7c"/><rect x="290.3" y="502.5" width="2.8" height="2.3" fill="#cccccc"/><path d="M290.90000000000003 502.5 v-1 a0.8 0.8 0 0 1 1.6 0 v0.4" stroke="#cccccc" stroke-width="0.5" fill="none"/><rect x="310.8" y="495.40000000000003" width="3.4" height="2.8" fill="none" stroke="#bcbcbc" stroke-width="0.5"/><path d="M311.8 495.40000000000003 v2.8 M313.2 495.40000000000003 v2.8" stroke="#bcbcbc" stroke-width="0.4"/><path d="M314.6 496.8 h1" stroke="#bcbcbc" stroke-width="0.5"/><path d="M318 498.3 v-3 l1.2 1.6 l1.2 -1.6 v3" fill="none" stroke="#bcbcbc" stroke-width="0.55"/><path d="M327.4 495.5 h-1.6 v1.3 h1.4 v1.3 h-1.6" fill="none" stroke="#bcbcbc" stroke-width="0.5"/><rect x="332.6" y="494.8" width="1.5" height="2.8" rx="0.7" fill="#bcbcbc"/><path d="M332 496.8 a1.35 1.35 0 0 0 2.7 0 M333.35 498.2 v1" stroke="#bcbcbc" stroke-width="0.4" fill="none"/><path d="M313.6 507.5 l-2.1 2 l2.1 2z" fill="#7c7c7c"/><circle cx="319.2" cy="509.5" r="1.2" stroke="#484848" stroke-width="0.55" fill="none"/><path d="M325 507.5 l2.1 2 l-2.1 2z" fill="#7c7c7c"/></svg>
<svg width="0" height="0" style="left:0;top:0"><defs><filter id="tb" x="-2%" y="-2%" width="104%" height="104%"><feGaussianBlur stdDeviation="0.45"/></filter></defs></svg>
<svg style="left:346.2px;top:404.7px;overflow:hidden" width="34.6" height="31" viewBox="0 0 34.6 31"><g filter="url(#tb)"><rect x="-2" y="-2" width="38.6" height="35" fill="#2c4627"/><path d="M6.228 -2 H36.6 V4.5 Q24.22 3.5 15.57 8 z" fill="#dcbcd4"/><path d="M15.57 9 Q24.22 4 36.6 6 V14 H17.3z" fill="#37552f"/><path d="M10.38 24 Q20.76 22 36.6 24 V33 H10.38z" fill="#5c4c3c"/><path d="M-2 -2 H6.920000000000001 Q10.38 8 14.532 16 Q19.03 22 20.76 33 H-2z" fill="#3b2c20"/><path d="M-2 10 Q5.19 12 10.38 20 Q13.840000000000002 26 15.57 33 H-2z" fill="#54412e"/><rect x="21.044" y="15.5" width="2.2" height="3.6" fill="#c03c78"/><circle cx="22.144000000000002" cy="14.6" r="0.9" fill="#3a2820"/><rect x="21.344" y="19.1" width="1.6" height="3.0" fill="#8a6a50"/></g></svg>
<div style="left:380.8px;top:404.7px;width:0.9px;height:31px;background:#141c24;"></div>
<svg style="left:381.7px;top:404.7px;overflow:hidden" width="53.8" height="31" viewBox="0 0 53.8 31"><g filter="url(#tb)"><rect x="-2" y="-2" width="57.8" height="35" fill="#4e3e28"/><path d="M26.9 -2 H55.8 V24 H37.66 Q33.355999999999995 14 26.9 -2z" fill="#2b4626"/><path d="M29.59 6 Q43.04 3 55.8 7 V12 Q43.04 9 32.279999999999994 11z" fill="#3c5c34"/><path d="M-2 -2 H27.976 Q32.279999999999994 8 35.508 16 L38.736 24 L26.9 16 Q16.139999999999997 9 -2 12z" fill="#33261b"/><path d="M32.279999999999994 24 Q43.04 22.5 55.8 24 V33 H32.279999999999994z" fill="#5e4e3e"/><path d="M29.59 18 Q36.584 20 41.964 33 H26.9z" fill="#3a2c20"/><rect x="40.595" y="15.5" width="2.2" height="3.6" fill="#c03c78"/><circle cx="41.695" cy="14.6" r="0.9" fill="#3a2820"/><rect x="40.895" y="19.1" width="1.6" height="3.0" fill="#8a6a50"/></g></svg>
<svg style="left:436px;top:404.7px;overflow:hidden" width="54.9" height="31" viewBox="0 0 54.9 31"><g filter="url(#tb)"><rect x="-2" y="-2" width="58.9" height="35" fill="#4e3e28"/><path d="M27.45 -2 H56.9 V24 H38.43 Q34.038 14 27.45 -2z" fill="#2b4626"/><path d="M30.195 6 Q43.92 3 56.9 7 V12 Q43.92 9 32.94 11z" fill="#3c5c34"/><path d="M-2 -2 H28.548000000000002 Q32.94 8 36.234 16 L39.528 24 L27.45 16 Q16.47 9 -2 12z" fill="#33261b"/><path d="M32.94 24 Q43.92 22.5 56.9 24 V33 H32.94z" fill="#5e4e3e"/><path d="M30.195 18 Q37.332 20 42.822 33 H27.45z" fill="#3a2c20"/><rect x="41.4475" y="15.5" width="2.2" height="3.6" fill="#c03c78"/><circle cx="42.5475" cy="14.6" r="0.9" fill="#3a2820"/><rect x="41.7475" y="19.1" width="1.6" height="3.0" fill="#8a6a50"/></g></svg>
<div style="left:435.4px;top:404.7px;width:0.7px;height:31px;background:#1c2630;"></div>
<div style="left:404px;top:404.7px;width:87px;height:5.6px;background:#6a98de;"></div>
<div style="left:408px;top:405.59999999999997px;width:3.9px;height:3.9px;background:#5a6a8a;"></div>
<div class="t" style="left:408.5px;top:406.14px;font-size:3.6px;line-height:4.32px;color:#d8d8e8;font-style:italic">fx</div>
<div class="t" style="left:414.5px;top:405.44px;font-size:4.6px;line-height:5.52px;color:#0e1c34;font-weight:bold;letter-spacing:-0.13px">A001_C103_0609BJ_001_1080p.mov</div>
<svg style="left:492.5px;top:404.7px;overflow:hidden" width="54.3" height="31" viewBox="0 0 54.3 31"><g filter="url(#tb)"><rect x="-2" y="-2" width="58.3" height="35" fill="#263e22"/><path d="M-2 -2 H56.3 V4 Q40.724999999999994 7 27.15 4 Q13.575 2 -2 6z" fill="#1c2c18"/><ellipse cx="10.86" cy="14" rx="9" ry="5" fill="#2f4c29"/><ellipse cx="29.865000000000002" cy="20" rx="8" ry="5" fill="#1f331b"/><ellipse cx="46.154999999999994" cy="12" rx="7" ry="6" fill="#2e4a28"/><ellipse cx="5.43" cy="26" rx="8" ry="4" fill="#1f331b"/><ellipse cx="37.6" cy="5.6" rx="2.5" ry="2.7" fill="#2a1c18"/><ellipse cx="37.9" cy="6.8" rx="1.7" ry="2.1" fill="#c49880"/><rect x="36.7" y="8" width="2" height="2" fill="#b88c76"/><path d="M31.8 10.6 Q35 8.6 37 9.4 Q40 8.6 42.6 10.8 L44.6 26 L43.6 28.6 H30 L29 26 z" fill="#c8397a"/><path d="M30.4 14 L29.4 26" stroke="#dc5c92" stroke-width="1.6"/><rect x="34.8" y="9.6" width="5.2" height="20" fill="#3a3644"/><path d="M34.8 12.5 h5.2 M34.8 16.5 h5.2 M34.8 20.5 h5.2 M34.8 24.5 h5.2" stroke="#8e8a9c" stroke-width="1.5"/><rect x="29.4" y="27.6" width="15" height="4" fill="#2a3426" opacity="0.5"/></g></svg>
<svg style="left:546.8px;top:404.7px;overflow:hidden" width="54.5" height="31" viewBox="0 0 54.5 31"><g filter="url(#tb)"><rect x="-2" y="-2" width="58.5" height="35" fill="#263e22"/><path d="M-2 -2 H56.5 V4 Q40.875 7 27.25 4 Q13.625 2 -2 6z" fill="#1c2c18"/><ellipse cx="10.9" cy="14" rx="9" ry="5" fill="#2f4c29"/><ellipse cx="29.975" cy="20" rx="8" ry="5" fill="#1f331b"/><ellipse cx="46.324999999999996" cy="12" rx="7" ry="6" fill="#2e4a28"/><ellipse cx="5.45" cy="26" rx="8" ry="4" fill="#1f331b"/><ellipse cx="34.2" cy="5.6" rx="2.5" ry="2.7" fill="#2a1c18"/><ellipse cx="34.5" cy="6.8" rx="1.7" ry="2.1" fill="#c49880"/><rect x="33.300000000000004" y="8" width="2" height="2" fill="#b88c76"/><path d="M28.400000000000002 10.6 Q31.6 8.6 33.6 9.4 Q36.6 8.6 39.2 10.8 L41.2 26 L40.2 28.6 H26.6 L25.6 26 z" fill="#c8397a"/><path d="M27.0 14 L26.0 26" stroke="#dc5c92" stroke-width="1.6"/><rect x="31.400000000000002" y="9.6" width="5.2" height="20" fill="#3a3644"/><path d="M31.400000000000002 12.5 h5.2 M31.400000000000002 16.5 h5.2 M31.400000000000002 20.5 h5.2 M31.400000000000002 24.5 h5.2" stroke="#8e8a9c" stroke-width="1.5"/><rect x="26.0" y="27.6" width="15" height="4" fill="#2a3426" opacity="0.5"/></g></svg>
<svg style="left:601.3px;top:404.7px;overflow:hidden" width="54.1" height="31" viewBox="0 0 54.1 31"><g filter="url(#tb)"><rect x="-2" y="-2" width="58.1" height="35" fill="#263e22"/><path d="M-2 -2 H56.1 V4 Q40.575 7 27.05 4 Q13.525 2 -2 6z" fill="#1c2c18"/><ellipse cx="10.82" cy="14" rx="9" ry="5" fill="#2f4c29"/><ellipse cx="29.755000000000003" cy="20" rx="8" ry="5" fill="#1f331b"/><ellipse cx="45.985" cy="12" rx="7" ry="6" fill="#2e4a28"/><ellipse cx="5.41" cy="26" rx="8" ry="4" fill="#1f331b"/><ellipse cx="35.4" cy="5.6" rx="2.5" ry="2.7" fill="#9a9aa0"/><ellipse cx="35.699999999999996" cy="6.8" rx="1.7" ry="2.1" fill="#c49880"/><rect x="34.5" y="8" width="2" height="2" fill="#b88c76"/><path d="M29.599999999999998 10.6 Q32.8 8.6 34.8 9.4 Q37.8 8.6 40.4 10.8 L42.4 26 L41.4 28.6 H27.799999999999997 L26.799999999999997 26 z" fill="#c8397a"/><path d="M28.199999999999996 14 L27.199999999999996 26" stroke="#dc5c92" stroke-width="1.6"/><rect x="32.599999999999994" y="9.6" width="5.2" height="20" fill="#3a3644"/><path d="M32.599999999999994 12.5 h5.2 M32.599999999999994 16.5 h5.2 M32.599999999999994 20.5 h5.2 M32.599999999999994 24.5 h5.2" stroke="#8e8a9c" stroke-width="1.5"/><rect x="27.199999999999996" y="27.6" width="15" height="4" fill="#2a3426" opacity="0.5"/></g></svg>
<svg style="left:655.4px;top:404.7px;overflow:hidden" width="54.6" height="31" viewBox="0 0 54.6 31"><g filter="url(#tb)"><rect x="-2" y="-2" width="58.6" height="35" fill="#263e22"/><path d="M-2 -2 H56.6 V4 Q40.95 7 27.3 4 Q13.65 2 -2 6z" fill="#1c2c18"/><ellipse cx="10.920000000000002" cy="14" rx="9" ry="5" fill="#2f4c29"/><ellipse cx="30.030000000000005" cy="20" rx="8" ry="5" fill="#1f331b"/><ellipse cx="46.41" cy="12" rx="7" ry="6" fill="#2e4a28"/><ellipse cx="5.460000000000001" cy="26" rx="8" ry="4" fill="#1f331b"/><ellipse cx="39.5" cy="5.6" rx="2.5" ry="2.7" fill="#9a9aa0"/><ellipse cx="39.8" cy="6.8" rx="1.7" ry="2.1" fill="#c49880"/><rect x="38.6" y="8" width="2" height="2" fill="#b88c76"/><path d="M33.699999999999996 10.6 Q36.9 8.6 38.9 9.4 Q41.9 8.6 44.5 10.8 L46.5 26 L45.5 28.6 H31.9 L30.9 26 z" fill="#c8397a"/><path d="M32.3 14 L31.299999999999997 26" stroke="#dc5c92" stroke-width="1.6"/><rect x="36.699999999999996" y="9.6" width="5.2" height="20" fill="#3a3644"/><path d="M36.699999999999996 12.5 h5.2 M36.699999999999996 16.5 h5.2 M36.699999999999996 20.5 h5.2 M36.699999999999996 24.5 h5.2" stroke="#8e8a9c" stroke-width="1.5"/><rect x="31.299999999999997" y="27.6" width="15" height="4" fill="#2a3426" opacity="0.5"/></g></svg>
<div style="left:546.5px;top:404.7px;width:0.8px;height:31px;background:#a8a8a0;"></div>
<div style="left:601px;top:404.7px;width:0.8px;height:31px;background:#a8a8a0;"></div>
<div style="left:655.1px;top:404.7px;width:0.8px;height:31px;background:#a8a8a0;"></div>
<div style="left:491.3px;top:404.5px;width:219.7px;height:31.9px;background:transparent;border:1.2px solid #d4d4cc;box-sizing:border-box"></div>
<div style="left:492px;top:404.7px;width:89.3px;height:5.7px;background:#e2e2e2;"></div>
<div style="left:495.6px;top:405.59999999999997px;width:4.3px;height:4px;background:#4a2c8e;"></div>
<div class="t" style="left:496.4px;top:406.14px;font-size:3.6px;line-height:4.32px;color:#d8d0f0;font-style:italic">fx</div>
<div class="t" style="left:502.2px;top:405.44px;font-size:4.6px;line-height:5.52px;color:#1c1c1c;font-weight:bold;letter-spacing:-0.13px">A001_C109_0609E8_001_1080p.mov</div>
<svg style="left:711.8px;top:404.7px;overflow:hidden" width="53.6" height="31" viewBox="0 0 53.6 31"><g filter="url(#tb)"><rect x="-2" y="-2" width="59" height="35" fill="#6c6856"/><rect x="-2" y="-2" width="59" height="15" fill="#273a22"/><path d="M-2 11.5 Q27.5 10 57 12.5 V15.5 Q27.5 13.5 -2 15.5z" fill="#42603a"/><ellipse cx="33.8" cy="21.6" rx="1.8" ry="1.1" fill="#4a4636"/><ellipse cx="13.5" cy="29.2" rx="2.3" ry="1.6" fill="#4a4636"/><ellipse cx="5.3" cy="17.1" rx="2.0" ry="1.6" fill="#8a8674"/><ellipse cx="8.0" cy="19.6" rx="1.5" ry="0.9" fill="#56523f"/><ellipse cx="44.9" cy="17.6" rx="2.0" ry="1.0" fill="#4a4636"/><ellipse cx="20.9" cy="19.2" rx="2.2" ry="0.9" fill="#7a7462"/><ellipse cx="9.7" cy="18.2" rx="2.9" ry="1.0" fill="#7a7462"/><ellipse cx="41.7" cy="27.2" rx="2.8" ry="1.0" fill="#989482"/><ellipse cx="11.9" cy="26.5" rx="1.7" ry="0.7" fill="#8a8674"/><ellipse cx="33.5" cy="17.6" rx="1.7" ry="1.2" fill="#4a4636"/><ellipse cx="17.0" cy="24.4" rx="1.6" ry="1.2" fill="#989482"/><ellipse cx="45.3" cy="22.9" rx="2.7" ry="1.6" fill="#7a7462"/><ellipse cx="19.8" cy="19.7" rx="1.7" ry="1.1" fill="#56523f"/><ellipse cx="1.2" cy="25.8" rx="2.6" ry="1.1" fill="#8a8674"/><ellipse cx="50.3" cy="25.4" rx="1.9" ry="1.0" fill="#989482"/><ellipse cx="40.0" cy="26.0" rx="1.6" ry="0.8" fill="#989482"/><ellipse cx="53.8" cy="24.2" rx="2.0" ry="1.1" fill="#7a7462"/><ellipse cx="42.9" cy="16.8" rx="1.3" ry="0.9" fill="#8a8674"/><ellipse cx="26.6" cy="23.0" rx="2.7" ry="1.1" fill="#4a4636"/><ellipse cx="6.2" cy="20.9" rx="1.4" ry="1.1" fill="#4a4636"/><ellipse cx="32.3" cy="27.4" rx="1.9" ry="0.8" fill="#989482"/><ellipse cx="7.2" cy="28.9" rx="1.6" ry="0.8" fill="#8a8674"/><ellipse cx="40.2" cy="29.3" rx="1.5" ry="1.4" fill="#7a7462"/><ellipse cx="12.7" cy="24.6" rx="2.6" ry="0.7" fill="#989482"/><ellipse cx="15.9" cy="27.9" rx="1.9" ry="0.7" fill="#8a8674"/><ellipse cx="22.3" cy="23.7" rx="1.6" ry="1.3" fill="#8a8674"/></g></svg>
<svg style="left:766px;top:404.7px;overflow:hidden" width="23" height="31" viewBox="0 0 23 31"><g filter="url(#tb)"><rect x="-2" y="-2" width="59" height="35" fill="#6c6856"/><rect x="-2" y="-2" width="59" height="15" fill="#273a22"/><path d="M-2 11.5 Q27.5 10 57 12.5 V15.5 Q27.5 13.5 -2 15.5z" fill="#42603a"/><ellipse cx="15.3" cy="26.9" rx="1.7" ry="1.3" fill="#7a7462"/><ellipse cx="8.0" cy="23.6" rx="2.9" ry="1.0" fill="#989482"/><ellipse cx="42.6" cy="26.2" rx="2.8" ry="1.3" fill="#989482"/><ellipse cx="15.7" cy="28.8" rx="1.6" ry="0.8" fill="#8a8674"/><ellipse cx="23.3" cy="19.9" rx="1.8" ry="0.9" fill="#8a8674"/><ellipse cx="26.1" cy="20.9" rx="1.9" ry="0.8" fill="#4a4636"/><ellipse cx="16.2" cy="20.2" rx="1.6" ry="1.4" fill="#989482"/><ellipse cx="28.5" cy="29.3" rx="1.2" ry="1.0" fill="#8a8674"/><ellipse cx="43.5" cy="22.6" rx="2.4" ry="1.1" fill="#7a7462"/><ellipse cx="11.1" cy="29.1" rx="1.3" ry="1.6" fill="#7a7462"/><ellipse cx="28.9" cy="16.6" rx="1.3" ry="1.6" fill="#7a7462"/><ellipse cx="30.4" cy="23.8" rx="1.6" ry="0.9" fill="#4a4636"/><ellipse cx="1.0" cy="18.1" rx="1.8" ry="1.4" fill="#7a7462"/><ellipse cx="22.9" cy="21.4" rx="1.3" ry="1.5" fill="#56523f"/><ellipse cx="49.4" cy="28.3" rx="2.4" ry="0.8" fill="#989482"/><ellipse cx="23.9" cy="21.0" rx="2.9" ry="0.9" fill="#4a4636"/><ellipse cx="32.4" cy="20.0" rx="1.3" ry="1.6" fill="#4a4636"/><ellipse cx="12.2" cy="26.8" rx="2.3" ry="1.1" fill="#7a7462"/><ellipse cx="3.5" cy="20.3" rx="1.4" ry="1.1" fill="#4a4636"/><ellipse cx="44.6" cy="16.9" rx="2.7" ry="1.1" fill="#8a8674"/><ellipse cx="20.6" cy="28.5" rx="1.9" ry="0.8" fill="#56523f"/><ellipse cx="3.0" cy="17.5" rx="2.4" ry="1.4" fill="#7a7462"/><ellipse cx="17.2" cy="19.9" rx="2.0" ry="0.7" fill="#4a4636"/><ellipse cx="46.8" cy="22.9" rx="2.9" ry="1.1" fill="#989482"/><ellipse cx="48.1" cy="28.8" rx="2.9" ry="1.5" fill="#989482"/><ellipse cx="32.0" cy="26.3" rx="1.9" ry="1.3" fill="#8a8674"/></g></svg>
<div style="left:765.2px;top:404.7px;width:0.7px;height:31px;background:#8a74c8;"></div>
<div style="left:711.8px;top:404.7px;width:77.2px;height:5.7px;background:#a98aea;"></div>
<div style="left:715.2px;top:405.59999999999997px;width:4.2px;height:4px;background:#56468a;"></div>
<div class="t" style="left:715.9px;top:406.14px;font-size:3.6px;line-height:4.32px;color:#e0d8f8;font-style:italic">fx</div>
<div class="t" style="left:721.8px;top:405.44px;font-size:4.6px;line-height:5.52px;color:#1a1040;width:67px;font-weight:bold;letter-spacing:-0.1px">A003_C028_061033_001_1080p</div>
<div style="left:346.2px;top:437.3px;width:442.8px;height:28px;background:#1e6e50;"></div>
<svg style="left:346.2px;top:437.9px" width="442.8" height="13.5" viewBox="0 0 442.8 13.5"><path d="M0 13.5 L0.0 0.0 L1.2 0.6 L2.4 1.3 L3.6 1.9 L4.8 2.6 L6.0 2.3 L7.2 2.4 L8.4 3.0 L9.6 3.3 L10.8 3.3 L12.0 3.7 L13.2 3.4 L14.4 4.0 L15.6 3.9 L16.8 4.3 L18.0 4.6 L19.2 5.0 L20.4 5.1 L21.6 4.9 L22.8 5.1 L24.0 5.6 L25.2 5.7 L26.4 5.9 L27.6 6.1 L28.8 6.4 L30.0 5.5 L31.2 3.1 L32.4 3.0 L33.6 3.5 L34.8 4.5 L36.0 4.2 L37.2 4.5 L38.4 4.6 L39.6 5.0 L40.8 5.2 L42.0 5.0 L43.2 3.8 L44.4 0.4 L45.6 0.4 L46.8 2.2 L48.0 2.0 L49.2 0.4 L50.4 1.8 L51.6 1.7 L52.8 2.3 L54.0 3.5 L55.2 3.9 L56.4 4.7 L57.6 4.6 L58.8 7.0 L60.0 5.6 L61.2 5.1 L62.4 5.6 L63.6 5.7 L64.8 3.4 L66.0 2.6 L67.2 2.0 L68.4 1.6 L69.6 1.6 L70.8 4.2 L72.0 4.3 L73.2 2.0 L74.4 4.2 L75.6 2.7 L76.8 3.5 L78.0 3.9 L79.2 3.8 L80.4 3.5 L81.6 3.2 L82.8 3.1 L84.0 3.8 L85.2 5.9 L86.4 3.3 L87.6 3.3 L88.8 1.5 L90.0 4.1 L91.2 3.8 L92.4 3.2 L93.6 3.3 L94.8 3.7 L96.0 4.1 L97.2 3.6 L98.4 3.1 L99.6 5.2 L100.8 0.4 L102.0 1.8 L103.2 2.0 L104.4 1.8 L105.6 2.0 L106.8 2.4 L108.0 4.3 L109.2 4.6 L110.4 3.2 L111.6 5.1 L112.8 7.0 L114.0 7.4 L115.2 5.8 L116.4 5.3 L117.6 5.3 L118.8 5.0 L120.0 4.9 L121.2 5.2 L122.4 4.7 L123.6 2.0 L124.8 4.3 L126.0 4.7 L127.2 4.2 L128.4 4.0 L129.6 3.8 L130.8 3.7 L132.0 3.4 L133.2 5.1 L134.4 3.1 L135.6 3.3 L136.8 2.9 L138.0 2.7 L139.2 3.4 L140.4 4.4 L141.6 4.2 L142.8 5.0 L144.0 2.5 L145.2 5.2 L146.4 7.2 L147.6 5.3 L148.8 5.4 L150.0 5.5 L151.2 3.9 L152.4 4.2 L153.6 5.0 L154.8 4.8 L156.0 5.1 L157.2 4.6 L158.4 4.5 L159.6 4.4 L160.8 5.3 L162.0 5.4 L163.2 4.0 L164.4 3.6 L165.6 3.3 L166.8 5.5 L168.0 2.8 L169.2 2.6 L170.4 2.2 L171.6 2.8 L172.8 3.3 L174.0 4.0 L175.2 4.2 L176.4 6.3 L177.6 4.9 L178.8 5.5 L180.0 5.6 L181.2 3.1 L182.4 5.5 L183.6 5.4 L184.8 3.6 L186.0 3.6 L187.2 3.4 L188.4 2.9 L189.6 5.3 L190.8 3.1 L192.0 3.3 L193.2 5.2 L194.4 2.9 L195.6 4.4 L196.8 4.7 L198.0 5.3 L199.2 5.3 L200.4 5.1 L201.6 5.4 L202.8 5.5 L204.0 7.0 L205.2 5.5 L206.4 5.3 L207.6 5.0 L208.8 5.4 L210.0 4.8 L211.2 5.1 L212.4 4.8 L213.6 4.3 L214.8 4.1 L216.0 4.1 L217.2 1.1 L218.4 3.6 L219.6 2.6 L220.8 3.2 L222.0 2.6 L223.2 2.5 L224.4 2.5 L225.6 3.0 L226.8 3.3 L228.0 1.6 L229.2 4.0 L230.4 5.9 L231.6 3.9 L232.8 6.0 L234.0 4.2 L235.2 4.2 L236.4 2.5 L237.6 4.0 L238.8 2.8 L240.0 2.4 L241.2 1.9 L242.4 2.1 L243.6 2.4 L244.8 2.6 L246.0 2.6 L247.2 2.1 L248.4 0.4 L249.6 2.5 L250.8 2.7 L252.0 3.4 L253.2 3.6 L254.4 5.6 L255.6 4.0 L256.8 3.4 L258.0 3.3 L259.2 3.2 L260.4 3.6 L261.6 4.4 L262.8 4.3 L264.0 4.7 L265.2 4.9 L266.4 4.7 L267.6 4.5 L268.8 4.7 L270.0 4.1 L271.2 4.8 L272.4 4.7 L273.6 5.0 L274.8 4.4 L276.0 4.2 L277.2 4.6 L278.4 4.5 L279.6 4.2 L280.8 4.9 L282.0 4.9 L283.2 4.8 L284.4 5.3 L285.6 4.7 L286.8 4.8 L288.0 5.0 L289.2 6.4 L290.4 5.1 L291.6 5.0 L292.8 3.2 L294.0 3.0 L295.2 0.4 L296.4 1.9 L297.6 1.6 L298.8 1.5 L300.0 1.4 L301.2 1.2 L302.4 0.4 L303.6 1.9 L304.8 0.4 L306.0 2.9 L307.2 2.9 L308.4 2.9 L309.6 2.7 L310.8 3.2 L312.0 2.5 L313.2 2.7 L314.4 3.7 L315.6 4.5 L316.8 4.2 L318.0 4.4 L319.2 4.8 L320.4 4.4 L321.6 4.9 L322.8 4.5 L324.0 4.4 L325.2 3.4 L326.4 2.9 L327.6 2.9 L328.8 0.4 L330.0 3.4 L331.2 0.4 L332.4 2.6 L333.6 2.5 L334.8 0.8 L336.0 0.4 L337.2 2.7 L338.4 2.5 L339.6 3.0 L340.8 3.5 L342.0 1.3 L343.2 3.5 L344.4 3.2 L345.6 3.4 L346.8 3.4 L348.0 3.5 L349.2 3.2 L350.4 3.1 L351.6 3.4 L352.8 3.4 L354.0 3.0 L355.2 3.2 L356.4 3.8 L357.6 5.8 L358.8 2.7 L360.0 2.6 L361.2 3.1 L362.4 2.4 L363.6 2.6 L364.8 2.8 L366.0 4.8 L367.2 3.1 L368.4 2.6 L369.6 4.7 L370.8 2.3 L372.0 1.8 L373.2 2.1 L374.4 1.8 L375.6 1.9 L376.8 2.2 L378.0 2.5 L379.2 2.4 L380.4 3.1 L381.6 3.6 L382.8 3.7 L384.0 3.2 L385.2 5.5 L386.4 1.1 L387.6 4.1 L388.8 4.0 L390.0 3.1 L391.2 2.7 L392.4 2.6 L393.6 5.3 L394.8 3.2 L396.0 3.3 L397.2 2.8 L398.4 3.1 L399.6 5.4 L400.8 3.1 L402.0 3.3 L403.2 0.9 L404.4 3.1 L405.6 3.6 L406.8 3.3 L408.0 5.4 L409.2 0.8 L410.4 3.1 L411.6 3.5 L412.8 3.9 L414.0 3.7 L415.2 3.6 L416.4 4.1 L417.6 1.6 L418.8 6.3 L420.0 6.5 L421.2 4.4 L422.4 4.8 L423.6 4.5 L424.8 6.6 L426.0 4.8 L427.2 4.1 L428.4 4.3 L429.6 4.3 L430.8 4.1 L432.0 4.6 L433.2 4.1 L434.4 3.6 L435.6 3.7 L436.8 3.8 L438.0 3.2 L439.2 3.3 L440.4 2.9 L441.6 3.3 L442.8 3.7 L442.8 13.5z" fill="#2ecc8a"/></svg>
<svg style="left:346.2px;top:452.2px" width="442.8" height="13.1" viewBox="0 0 442.8 13.1"><path d="M0 13.1 L0.0 0.0 L1.2 0.6 L2.4 1.3 L3.6 1.9 L4.8 2.5 L6.0 2.5 L7.2 2.8 L8.4 2.6 L9.6 2.8 L10.8 3.3 L12.0 3.3 L13.2 3.4 L14.4 4.0 L15.6 3.9 L16.8 4.1 L18.0 4.4 L19.2 4.8 L20.4 5.0 L21.6 4.9 L22.8 5.1 L24.0 5.0 L25.2 5.7 L26.4 6.0 L27.6 6.0 L28.8 6.4 L30.0 4.5 L31.2 2.7 L32.4 2.5 L33.6 2.8 L34.8 2.3 L36.0 4.5 L37.2 2.9 L38.4 2.9 L39.6 2.7 L40.8 2.2 L42.0 0.4 L43.2 3.5 L44.4 4.6 L45.6 5.1 L46.8 5.6 L48.0 7.3 L49.2 3.8 L50.4 5.1 L51.6 5.5 L52.8 5.5 L54.0 3.8 L55.2 2.5 L56.4 2.6 L57.6 0.4 L58.8 2.0 L60.0 2.4 L61.2 1.8 L62.4 2.1 L63.6 1.7 L64.8 3.5 L66.0 4.3 L67.2 4.1 L68.4 4.9 L69.6 5.0 L70.8 5.1 L72.0 4.8 L73.2 4.9 L74.4 4.7 L75.6 4.0 L76.8 5.9 L78.0 3.0 L79.2 5.4 L80.4 3.4 L81.6 3.0 L82.8 3.2 L84.0 2.9 L85.2 3.1 L86.4 2.8 L87.6 2.4 L88.8 2.4 L90.0 2.4 L91.2 2.2 L92.4 0.4 L93.6 3.4 L94.8 3.4 L96.0 3.0 L97.2 6.2 L98.4 4.9 L99.6 5.4 L100.8 4.9 L102.0 4.9 L103.2 3.3 L104.4 5.4 L105.6 6.5 L106.8 4.4 L108.0 3.8 L109.2 3.4 L110.4 3.8 L111.6 3.3 L112.8 3.6 L114.0 3.2 L115.2 3.2 L116.4 3.3 L117.6 1.5 L118.8 2.9 L120.0 2.2 L121.2 2.2 L122.4 1.7 L123.6 1.5 L124.8 1.7 L126.0 1.5 L127.2 2.1 L128.4 2.2 L129.6 3.1 L130.8 4.4 L132.0 4.1 L133.2 4.2 L134.4 4.2 L135.6 4.3 L136.8 4.5 L138.0 4.2 L139.2 4.2 L140.4 0.5 L141.6 2.4 L142.8 2.2 L144.0 2.3 L145.2 5.2 L146.4 2.3 L147.6 2.6 L148.8 2.6 L150.0 2.1 L151.2 4.4 L152.4 1.9 L153.6 1.9 L154.8 2.1 L156.0 1.8 L157.2 1.4 L158.4 2.0 L159.6 1.5 L160.8 0.4 L162.0 4.0 L163.2 2.5 L164.4 3.5 L165.6 3.4 L166.8 5.8 L168.0 4.2 L169.2 4.4 L170.4 4.4 L171.6 6.0 L172.8 3.5 L174.0 4.4 L175.2 4.8 L176.4 4.5 L177.6 4.6 L178.8 5.0 L180.0 5.4 L181.2 5.0 L182.4 5.5 L183.6 5.3 L184.8 4.2 L186.0 5.8 L187.2 3.2 L188.4 3.2 L189.6 3.1 L190.8 3.2 L192.0 3.3 L193.2 2.9 L194.4 3.0 L195.6 3.2 L196.8 3.2 L198.0 3.8 L199.2 4.2 L200.4 4.1 L201.6 4.1 L202.8 4.4 L204.0 4.0 L205.2 5.6 L206.4 3.7 L207.6 1.8 L208.8 3.6 L210.0 1.7 L211.2 4.4 L212.4 4.7 L213.6 4.2 L214.8 4.6 L216.0 6.3 L217.2 3.2 L218.4 2.7 L219.6 2.3 L220.8 4.3 L222.0 4.7 L223.2 2.8 L224.4 3.0 L225.6 3.1 L226.8 3.0 L228.0 4.6 L229.2 2.5 L230.4 0.4 L231.6 4.8 L232.8 2.9 L234.0 3.0 L235.2 0.4 L236.4 0.4 L237.6 2.2 L238.8 3.4 L240.0 4.0 L241.2 4.6 L242.4 4.4 L243.6 4.1 L244.8 4.0 L246.0 6.5 L247.2 2.6 L248.4 4.3 L249.6 4.0 L250.8 3.5 L252.0 3.4 L253.2 2.9 L254.4 3.1 L255.6 3.7 L256.8 3.3 L258.0 3.0 L259.2 3.1 L260.4 3.4 L261.6 5.8 L262.8 3.4 L264.0 3.8 L265.2 3.7 L266.4 3.8 L267.6 3.1 L268.8 3.1 L270.0 5.7 L271.2 3.7 L272.4 4.0 L273.6 4.7 L274.8 4.8 L276.0 4.9 L277.2 6.6 L278.4 4.2 L279.6 4.3 L280.8 4.5 L282.0 4.6 L283.2 4.0 L284.4 3.5 L285.6 3.8 L286.8 4.1 L288.0 3.9 L289.2 3.5 L290.4 3.2 L291.6 3.8 L292.8 3.2 L294.0 5.3 L295.2 3.3 L296.4 3.2 L297.6 4.8 L298.8 0.4 L300.0 3.1 L301.2 2.4 L302.4 2.1 L303.6 3.4 L304.8 3.9 L306.0 4.4 L307.2 4.2 L308.4 4.4 L309.6 4.6 L310.8 6.6 L312.0 5.2 L313.2 4.7 L314.4 2.2 L315.6 4.0 L316.8 3.9 L318.0 2.4 L319.2 4.3 L320.4 4.6 L321.6 4.1 L322.8 4.6 L324.0 4.4 L325.2 4.9 L326.4 4.4 L327.6 4.8 L328.8 4.9 L330.0 4.3 L331.2 4.6 L332.4 4.1 L333.6 4.0 L334.8 3.8 L336.0 3.5 L337.2 3.6 L338.4 3.9 L339.6 4.2 L340.8 5.7 L342.0 3.2 L343.2 3.2 L344.4 3.3 L345.6 5.6 L346.8 3.0 L348.0 3.5 L349.2 3.7 L350.4 3.0 L351.6 0.4 L352.8 0.4 L354.0 3.2 L355.2 2.9 L356.4 2.7 L357.6 3.2 L358.8 4.1 L360.0 4.7 L361.2 2.0 L362.4 4.1 L363.6 4.2 L364.8 4.5 L366.0 6.6 L367.2 2.8 L368.4 6.7 L369.6 4.9 L370.8 4.8 L372.0 4.7 L373.2 5.1 L374.4 7.1 L375.6 6.8 L376.8 7.1 L378.0 5.6 L379.2 4.7 L380.4 4.3 L381.6 4.0 L382.8 3.8 L384.0 4.7 L385.2 4.9 L386.4 5.1 L387.6 5.0 L388.8 4.4 L390.0 4.7 L391.2 4.8 L392.4 4.6 L393.6 4.7 L394.8 4.5 L396.0 4.1 L397.2 4.3 L398.4 4.3 L399.6 2.1 L400.8 4.0 L402.0 3.9 L403.2 5.3 L404.4 2.8 L405.6 2.9 L406.8 3.4 L408.0 3.2 L409.2 3.2 L410.4 0.6 L411.6 6.1 L412.8 4.8 L414.0 4.6 L415.2 2.4 L416.4 4.4 L417.6 4.6 L418.8 4.9 L420.0 4.9 L421.2 4.2 L422.4 5.5 L423.6 2.5 L424.8 2.2 L426.0 2.3 L427.2 2.3 L428.4 1.8 L429.6 2.1 L430.8 1.6 L432.0 4.4 L433.2 3.5 L434.4 6.3 L435.6 5.0 L436.8 4.5 L438.0 5.3 L439.2 5.1 L440.4 4.9 L441.6 4.8 L442.8 5.2 L442.8 13.1z" fill="#2ecc8a"/></svg>
<div style="left:346.2px;top:451.35px;width:442.8px;height:0.85px;background:#5e9c80;"></div>
<div style="left:346.2px;top:464.6px;width:442.8px;height:0.7px;background:#1a5a42;"></div>
<div style="left:350px;top:438.6px;width:4px;height:3.6px;background:#d4bccc;"></div>
<div class="t" style="left:350.5px;top:438.96px;font-size:3.4px;line-height:4.08px;color:#303030;font-style:italic">fx</div>
<div style="left:346.6px;top:446px;width:3.3px;height:4px;background:#3c8a6a;"></div>
<div style="left:346.6px;top:460.4px;width:3.3px;height:4px;background:#3c8a6a;"></div>
<div style="left:510.9px;top:352px;width:1px;height:168px;background:#2a76a8;opacity:0.85"></div>
<svg style="left:507.5px;top:346px;" width="8" height="7" viewBox="0 0 8 7"><path d="M1.7 1.8 H6.2 V4.6 L5.2 6.2 H2.7 L1.7 4.6 Z" fill="#2f98e2"/></svg>
<div style="left:790px;top:353.5px;width:5.3px;height:166.5px;background:#1a1a1a;"></div>
<div style="left:790.3px;top:363px;width:4.6px;height:5.5px;background:#2e2e2e;"></div>
<div style="left:790.3px;top:503.5px;width:4.6px;height:5.5px;background:#2e2e2e;"></div>
<div style="left:276px;top:520.5px;width:519px;height:5.3px;background:#191919;"></div>
<div style="left:356.5px;top:521px;width:45.5px;height:4.4px;background:#262626;"></div>
<div style="left:356.5px;top:521px;width:5px;height:4.4px;background:#333;"></div>
<div style="left:397px;top:521px;width:5px;height:4.4px;background:#333;"></div>
<div style="left:797.3px;top:321.3px;width:29.7px;height:204.7px;background:#1e1e1e;"></div>
<div style="left:798.6px;top:327.2px;width:17.8px;height:191px;background:#000;"></div>
<div style="left:807.4px;top:327.7px;width:9px;height:3.2px;background:#ea3440;"></div>
<div class="t" style="left:820.5px;top:329.60px;font-size:4.5px;line-height:5.40px;color:#989898;font-weight:bold;letter-spacing:-0.2px">0</div>
<div style="left:817px;top:331.95px;width:1.8px;height:0.5px;background:#6a6a6a;"></div>
<div class="t" style="left:818.8px;top:338.77px;font-size:4.5px;line-height:5.40px;color:#989898;font-weight:bold;letter-spacing:-0.2px">-3</div>
<div style="left:817px;top:341.12px;width:1.8px;height:0.5px;background:#6a6a6a;"></div>
<div class="t" style="left:818.8px;top:347.94px;font-size:4.5px;line-height:5.40px;color:#989898;font-weight:bold;letter-spacing:-0.2px">-6</div>
<div style="left:817px;top:350.28999999999996px;width:1.8px;height:0.5px;background:#6a6a6a;"></div>
<div class="t" style="left:818.8px;top:357.11px;font-size:4.5px;line-height:5.40px;color:#989898;font-weight:bold;letter-spacing:-0.2px">-9</div>
<div style="left:817px;top:359.46px;width:1.8px;height:0.5px;background:#6a6a6a;"></div>
<div class="t" style="left:818.8px;top:366.28px;font-size:4.5px;line-height:5.40px;color:#989898;font-weight:bold;letter-spacing:-0.2px">-12</div>
<div style="left:817px;top:368.63px;width:1.8px;height:0.5px;background:#6a6a6a;"></div>
<div class="t" style="left:818.8px;top:375.45px;font-size:4.5px;line-height:5.40px;color:#989898;font-weight:bold;letter-spacing:-0.2px">-15</div>
<div style="left:817px;top:377.8px;width:1.8px;height:0.5px;background:#6a6a6a;"></div>
<div class="t" style="left:818.8px;top:384.62px;font-size:4.5px;line-height:5.40px;color:#989898;font-weight:bold;letter-spacing:-0.2px">-18</div>
<div style="left:817px;top:386.96999999999997px;width:1.8px;height:0.5px;background:#6a6a6a;"></div>
<div class="t" style="left:818.8px;top:393.79px;font-size:4.5px;line-height:5.40px;color:#989898;font-weight:bold;letter-spacing:-0.2px">-21</div>
<div style="left:817px;top:396.14px;width:1.8px;height:0.5px;background:#6a6a6a;"></div>
<div class="t" style="left:818.8px;top:402.96px;font-size:4.5px;line-height:5.40px;color:#989898;font-weight:bold;letter-spacing:-0.2px">-24</div>
<div style="left:817px;top:405.31px;width:1.8px;height:0.5px;background:#6a6a6a;"></div>
<div class="t" style="left:818.8px;top:412.13px;font-size:4.5px;line-height:5.40px;color:#989898;font-weight:bold;letter-spacing:-0.2px">-27</div>
<div style="left:817px;top:414.48px;width:1.8px;height:0.5px;background:#6a6a6a;"></div>
<div class="t" style="left:818.8px;top:421.30px;font-size:4.5px;line-height:5.40px;color:#989898;font-weight:bold;letter-spacing:-0.2px">-30</div>
<div style="left:817px;top:423.65px;width:1.8px;height:0.5px;background:#6a6a6a;"></div>
<div class="t" style="left:818.8px;top:430.47px;font-size:4.5px;line-height:5.40px;color:#989898;font-weight:bold;letter-spacing:-0.2px">-33</div>
<div style="left:817px;top:432.82px;width:1.8px;height:0.5px;background:#6a6a6a;"></div>
<div class="t" style="left:818.8px;top:439.64px;font-size:4.5px;line-height:5.40px;color:#989898;font-weight:bold;letter-spacing:-0.2px">-36</div>
<div style="left:817px;top:441.99px;width:1.8px;height:0.5px;background:#6a6a6a;"></div>
<div class="t" style="left:818.8px;top:448.81px;font-size:4.5px;line-height:5.40px;color:#989898;font-weight:bold;letter-spacing:-0.2px">-39</div>
<div style="left:817px;top:451.15999999999997px;width:1.8px;height:0.5px;background:#6a6a6a;"></div>
<div class="t" style="left:818.8px;top:457.98px;font-size:4.5px;line-height:5.40px;color:#989898;font-weight:bold;letter-spacing:-0.2px">-42</div>
<div style="left:817px;top:460.33px;width:1.8px;height:0.5px;background:#6a6a6a;"></div>
<div class="t" style="left:818.8px;top:467.15px;font-size:4.5px;line-height:5.40px;color:#989898;font-weight:bold;letter-spacing:-0.2px">-45</div>
<div style="left:817px;top:469.5px;width:1.8px;height:0.5px;background:#6a6a6a;"></div>
<div class="t" style="left:818.8px;top:476.32px;font-size:4.5px;line-height:5.40px;color:#989898;font-weight:bold;letter-spacing:-0.2px">-48</div>
<div style="left:817px;top:478.66999999999996px;width:1.8px;height:0.5px;background:#6a6a6a;"></div>
<div class="t" style="left:818.8px;top:485.49px;font-size:4.5px;line-height:5.40px;color:#989898;font-weight:bold;letter-spacing:-0.2px">-51</div>
<div style="left:817px;top:487.84px;width:1.8px;height:0.5px;background:#6a6a6a;"></div>
<div class="t" style="left:818.8px;top:494.66px;font-size:4.5px;line-height:5.40px;color:#989898;font-weight:bold;letter-spacing:-0.2px">-54</div>
<div style="left:817px;top:497.01px;width:1.8px;height:0.5px;background:#6a6a6a;"></div>
<div class="t" style="left:818.8px;top:503.83px;font-size:4.5px;line-height:5.40px;color:#989898;font-weight:bold;letter-spacing:-0.2px">-57</div>
<div style="left:817px;top:506.17999999999995px;width:1.8px;height:0.5px;background:#6a6a6a;"></div>
<div class="t" style="left:818.8px;top:509.60px;font-size:4.5px;line-height:5.40px;color:#989898;font-weight:bold;letter-spacing:-0.2px">dB</div>
<div style="left:817px;top:335.057px;width:1px;height:0.4px;background:#4a4a4a;"></div>
<div style="left:817px;top:338.114px;width:1px;height:0.4px;background:#4a4a4a;"></div>
<div style="left:817px;top:344.228px;width:1px;height:0.4px;background:#4a4a4a;"></div>
<div style="left:817px;top:347.285px;width:1px;height:0.4px;background:#4a4a4a;"></div>
<div style="left:817px;top:353.399px;width:1px;height:0.4px;background:#4a4a4a;"></div>
<div style="left:817px;top:356.456px;width:1px;height:0.4px;background:#4a4a4a;"></div>
<div style="left:817px;top:362.57px;width:1px;height:0.4px;background:#4a4a4a;"></div>
<div style="left:817px;top:365.627px;width:1px;height:0.4px;background:#4a4a4a;"></div>
<div style="left:817px;top:371.741px;width:1px;height:0.4px;background:#4a4a4a;"></div>
<div style="left:817px;top:374.798px;width:1px;height:0.4px;background:#4a4a4a;"></div>
<div style="left:817px;top:380.912px;width:1px;height:0.4px;background:#4a4a4a;"></div>
<div style="left:817px;top:383.969px;width:1px;height:0.4px;background:#4a4a4a;"></div>
<div style="left:817px;top:390.083px;width:1px;height:0.4px;background:#4a4a4a;"></div>
<div style="left:817px;top:393.14px;width:1px;height:0.4px;background:#4a4a4a;"></div>
<div style="left:817px;top:399.254px;width:1px;height:0.4px;background:#4a4a4a;"></div>
<div style="left:817px;top:402.311px;width:1px;height:0.4px;background:#4a4a4a;"></div>
<div style="left:817px;top:408.425px;width:1px;height:0.4px;background:#4a4a4a;"></div>
<div style="left:817px;top:411.482px;width:1px;height:0.4px;background:#4a4a4a;"></div>
<div style="left:817px;top:417.596px;width:1px;height:0.4px;background:#4a4a4a;"></div>
<div style="left:817px;top:420.65299999999996px;width:1px;height:0.4px;background:#4a4a4a;"></div>
<div style="left:817px;top:426.767px;width:1px;height:0.4px;background:#4a4a4a;"></div>
<div style="left:817px;top:429.824px;width:1px;height:0.4px;background:#4a4a4a;"></div>
<div style="left:817px;top:435.938px;width:1px;height:0.4px;background:#4a4a4a;"></div>
<div style="left:817px;top:438.995px;width:1px;height:0.4px;background:#4a4a4a;"></div>
<div style="left:817px;top:445.109px;width:1px;height:0.4px;background:#4a4a4a;"></div>
<div style="left:817px;top:448.166px;width:1px;height:0.4px;background:#4a4a4a;"></div>
<div style="left:817px;top:454.28000000000003px;width:1px;height:0.4px;background:#4a4a4a;"></div>
<div style="left:817px;top:457.337px;width:1px;height:0.4px;background:#4a4a4a;"></div>
<div style="left:817px;top:463.45099999999996px;width:1px;height:0.4px;background:#4a4a4a;"></div>
<div style="left:817px;top:466.508px;width:1px;height:0.4px;background:#4a4a4a;"></div>
<div style="left:817px;top:472.622px;width:1px;height:0.4px;background:#4a4a4a;"></div>
<div style="left:817px;top:475.67900000000003px;width:1px;height:0.4px;background:#4a4a4a;"></div>
<div style="left:817px;top:481.793px;width:1px;height:0.4px;background:#4a4a4a;"></div>
<div style="left:817px;top:484.84999999999997px;width:1px;height:0.4px;background:#4a4a4a;"></div>
<div style="left:817px;top:490.964px;width:1px;height:0.4px;background:#4a4a4a;"></div>
<div style="left:817px;top:494.021px;width:1px;height:0.4px;background:#4a4a4a;"></div>
<div style="left:817px;top:500.135px;width:1px;height:0.4px;background:#4a4a4a;"></div>
<div style="left:817px;top:503.192px;width:1px;height:0.4px;background:#4a4a4a;"></div>
<div style="left:799px;top:517px;width:17.3px;height:0.8px;background:#6a6a10;"></div>
<div style="left:800px;top:518.8px;width:7px;height:5px;background:#2a2a2a;"></div>
<div style="left:808.6px;top:518.8px;width:7px;height:5px;background:#2a2a2a;"></div>
<div class="t" style="left:802.3px;top:520.24px;font-size:3.6px;line-height:4.32px;color:#a0a0a0;">S</div>
<div class="t" style="left:811px;top:520.24px;font-size:3.6px;line-height:4.32px;color:#a0a0a0;">S</div>
<div style="left:828.2px;top:11.5px;width:150.9px;height:514.8px;background:#1e1e1e;border:0.8px solid #164868;box-sizing:border-box"></div>
<div class="t" style="left:832.5px;top:18.04px;font-size:4.6px;line-height:5.52px;color:#dcdcdc;font-weight:bold;letter-spacing:-0.12px">Lumetri Color</div>
<svg style="left:865.2px;top:18.1px" width="3" height="4" viewBox="0 0 3 4"><path d="M0.2 0.7 h2.2 M0.2 2 h2.2 M0.2 3.3 h2.2" stroke="#8a8a8a" stroke-width="0.6"/></svg>
<div class="t" style="left:831.8px;top:32.30px;font-size:4.5px;line-height:5.40px;color:#b0b0b0;letter-spacing:-0.02px;">Master * A001_C109_0609E8...</div>
<svg style="left:902.5px;top:33.1px" width="3.4" height="2.4" viewBox="0 0 3.4 2.4"><path d="M0 0.1 h3.4 l-1.7 2.2z" fill="#d8d8d8"/></svg>
<div class="t" style="left:908.3px;top:32.24px;font-size:4.6px;line-height:5.52px;color:#2e8fd8;">V1-0009_A001_C010_060...</div>
<div style="left:829px;top:37.8px;width:143px;height:0.6px;background:#161616;"></div>
<div style="left:972px;top:38.8px;width:6px;height:486.5px;background:#141414;"></div>
<div class="t" style="left:832.5px;top:44.90px;font-size:4.5px;line-height:5.40px;color:#ababab;">Basic Correction</div>
<div style="left:961.9px;top:43.300000000000004px;width:5.2px;height:5.2px;background:#151515;"></div>
<div class="t" style="left:832.5px;top:60.50px;font-size:4.5px;line-height:5.40px;color:#ababab;">Creative</div>
<div style="left:961.9px;top:58.900000000000006px;width:5.2px;height:5.2px;background:#151515;"></div>
<div class="t" style="left:832.5px;top:76.20px;font-size:4.5px;line-height:5.40px;color:#ababab;">Curves</div>
<div style="left:961.9px;top:74.60000000000001px;width:5.2px;height:5.2px;background:#151515;"></div>
<div class="t" style="left:832.5px;top:91.80px;font-size:4.5px;line-height:5.40px;color:#ababab;">Color Wheels</div>
<div style="left:961.9px;top:90.2px;width:5.2px;height:5.2px;background:#151515;"></div>
<div class="t" style="left:832.5px;top:107.40px;font-size:4.5px;line-height:5.40px;color:#ababab;">HSL Secondary</div>
<div style="left:961.9px;top:105.8px;width:5.2px;height:5.2px;background:#151515;"></div>
<div style="left:829px;top:54.2px;width:143px;height:0.7px;background:#171717;"></div>
<div style="left:829px;top:69.9px;width:143px;height:0.7px;background:#171717;"></div>
<div style="left:829px;top:85.5px;width:143px;height:0.7px;background:#171717;"></div>
<div style="left:829px;top:101.2px;width:143px;height:0.7px;background:#171717;"></div>
<div class="t" style="left:838.5px;top:121.30px;font-size:4.5px;line-height:5.40px;color:#a0a0a0;">Key</div>
<div class="t" style="left:838.4px;top:131.30px;font-size:4.5px;line-height:5.40px;color:#a0a0a0;">Set color</div>
<div style="left:890px;top:131.2px;width:7.2px;height:3.7px;background:#c8487e;"></div>
<div class="t" style="left:838.4px;top:141.30px;font-size:4.5px;line-height:5.40px;color:#a0a0a0;">Add color</div>
<div style="left:890px;top:141.2px;width:7.2px;height:3.7px;background:#060606;"></div>
<div class="t" style="left:838.4px;top:151.30px;font-size:4.5px;line-height:5.40px;color:#a0a0a0;">Remove color</div>
<div style="left:890px;top:151.2px;width:7.2px;height:3.7px;background:#060606;"></div>
<div class="t" style="left:842.3px;top:173.70px;font-size:4.5px;line-height:5.40px;color:#8c8c8c;">H</div>
<div class="t" style="left:842.6px;top:191.30px;font-size:4.5px;line-height:5.40px;color:#8c8c8c;">S</div>
<div class="t" style="left:842.8px;top:208.80px;font-size:4.5px;line-height:5.40px;color:#8c8c8c;">L</div>
<div style="left:957.3px;top:172.70000000000002px;width:5.2px;height:5.2px;background:#111;"></div>
<div style="left:957.3px;top:190.20000000000002px;width:5.2px;height:5.2px;background:#111;"></div>
<div style="left:957.3px;top:207.70000000000002px;width:5.2px;height:5.2px;background:#111;"></div>
<div style="left:840.3px;top:228.2px;width:5.2px;height:5.2px;background:#141414;"></div>
<div style="left:847.5px;top:227.3px;width:53.5px;height:7.4px;background:#141414;"></div>
<div class="t" style="left:850px;top:229.30px;font-size:4.5px;line-height:5.40px;color:#d0d0d0;">Color/Gray</div>
<svg style="left:895.3px;top:230.1px" width="3.4" height="2.4" viewBox="0 0 3.4 2.4"><path d="M0 0.1 h3.4 l-1.7 2.2z" fill="#d8d8d8"/></svg>
<div style="left:935px;top:227.2px;width:30px;height:8.2px;background:#262626;"></div>
<div class="t" style="left:944.5px;top:229.60px;font-size:4.5px;line-height:5.40px;color:#e0e0e0;letter-spacing:-0.05px;font-weight:bold">Reset</div>
<div class="t" style="left:838.5px;top:240.90px;font-size:4.5px;line-height:5.40px;color:#a0a0a0;">Refine</div>
<div class="t" style="left:838.5px;top:250.30px;font-size:4.5px;line-height:5.40px;color:#8c8c8c;">Denoise</div>
<div style="left:869.4px;top:253px;width:83.3px;height:1px;background:#101010;"></div>
<div class="t" style="right:14.700000000000045px;top:251.00px;font-size:4.5px;line-height:5.40px;color:#2e8fd8;text-align:right;">52,7</div>
<div class="t" style="left:838.5px;top:260.10px;font-size:4.5px;line-height:5.40px;color:#8c8c8c;">Blur</div>
<div style="left:869.4px;top:263px;width:83.3px;height:1px;background:#101010;"></div>
<div class="t" style="right:14.700000000000045px;top:260.80px;font-size:4.5px;line-height:5.40px;color:#2e8fd8;text-align:right;">0,9</div>
<div class="t" style="left:838.5px;top:272.60px;font-size:4.5px;line-height:5.40px;color:#a0a0a0;">Correction</div>
<div style="left:859.6px;top:293.5px;width:1.8px;height:83.5px;background:#070707;"></div>
<svg style="left:0px;top:0px;" width="980" height="535" viewBox="0 0 980 535"><path d="M963.1 46.2 l1 1.2 l1.8 -3" stroke="#f0f0f0" stroke-width="0.95" fill="none"/><path d="M963.1 61.800000000000004 l1 1.2 l1.8 -3" stroke="#f0f0f0" stroke-width="0.95" fill="none"/><path d="M963.1 77.50000000000001 l1 1.2 l1.8 -3" stroke="#f0f0f0" stroke-width="0.95" fill="none"/><path d="M963.1 93.10000000000001 l1 1.2 l1.8 -3" stroke="#f0f0f0" stroke-width="0.95" fill="none"/><path d="M963.1 108.7 l1 1.2 l1.8 -3" stroke="#f0f0f0" stroke-width="0.95" fill="none"/><path d="M833.5 122.1 h3 l-1.5 1.9z" fill="#d0d0d0"/><path d="M899.5 134.8 l2.4 -2.4 M901.6 131.8 l1.2 -1 l0.8 0.8 l-1 1.2z" stroke="#c0c0c0" stroke-width="0.7" fill="#c0c0c0"/><path d="M899.5 144.8 l2.4 -2.4 M901.6 141.8 l1.2 -1 l0.8 0.8 l-1 1.2z" stroke="#c0c0c0" stroke-width="0.7" fill="#c0c0c0"/><path d="M899.5 154.8 l2.4 -2.4 M901.6 151.8 l1.2 -1 l0.8 0.8 l-1 1.2z" stroke="#c0c0c0" stroke-width="0.7" fill="#c0c0c0"/><circle cx="865" cy="163.4" r="2.6" fill="#8c0c10"/><circle cx="878" cy="163.4" r="2.6" fill="#8e8a10"/><circle cx="890.8" cy="163.4" r="2.6" fill="#168a18"/><circle cx="903.8" cy="163.4" r="2.6" fill="#148a8c"/><circle cx="916.8" cy="163.4" r="2.6" fill="#1010f0"/><circle cx="929.8" cy="163.4" r="2.6" fill="#860c86"/><circle cx="942.8" cy="163.4" r="2.6" fill="#d8d0da"/><defs><linearGradient id="hue" x1="0" x2="1"><stop offset="0" stop-color="#e01010"/><stop offset="0.17" stop-color="#e0e010"/><stop offset="0.33" stop-color="#10d010"/><stop offset="0.5" stop-color="#10d0d0"/><stop offset="0.66" stop-color="#1010f0"/><stop offset="0.83" stop-color="#e010e0"/><stop offset="1" stop-color="#e01030"/></linearGradient><linearGradient id="sat" x1="0" x2="1"><stop offset="0" stop-color="#8a8a8a"/><stop offset="1" stop-color="#e8187c"/></linearGradient><linearGradient id="lum" x1="0" x2="1"><stop offset="0" stop-color="#000"/><stop offset="0.5" stop-color="#e8187c"/><stop offset="1" stop-color="#fff"/></linearGradient></defs><rect x="858.7" y="179.5" width="91" height="1.5" fill="url(#hue)"/><path d="M935 178.8 L937.3 172.3 H945.6 L947.6 178.8z" fill="#8a8a8a"/><rect x="937.3" y="172.3" width="8.3" height="6.5" fill="#a8a8a8"/><path d="M940.8 172.3 v6.5 M942.6 172.3 v6.5" stroke="#e8e8e8" stroke-width="0.6"/><path d="M934.6 169.3 h5 l-2.5 2.8z" fill="#9a9a9a"/><path d="M932.2 182.6 h5 l-2.5 -2.8z" fill="#9a9a9a"/><rect x="858.7" y="197" width="91" height="1.4" fill="url(#sat)"/><path d="M867 196.7 L886.7 190.6 H905 L923.4 196.7z" fill="#767676"/><rect x="886.7" y="190.6" width="18.3" height="6.1" fill="#9c9c9c"/><path d="M895.6 190.6 v6.1" stroke="#f0f0f0" stroke-width="0.7"/><path d="M901.8 187 h5 l-2.5 2.8z" fill="#9a9a9a"/><path d="M921.5 200.2 h5 l-2.5 -2.8z" fill="#9a9a9a"/><rect x="858.7" y="214.8" width="91" height="1.4" fill="url(#lum)"/><path d="M873.7 214.4 L906.4 208.2 H949.6 V214.4z" fill="#767676"/><rect x="906.4" y="208.2" width="43.2" height="6.2" fill="#9c9c9c"/><path d="M933.4 208.2 v6.2" stroke="#f0f0f0" stroke-width="0.7"/><path d="M903.9 204.6 h5 l-2.5 2.8z" fill="#9a9a9a"/><path d="M873 218.2 h5 l-2.5 -2.8z" fill="#9a9a9a"/><path d="M958.5 175.5 l1 1.2 l1.8 -3" stroke="#f0f0f0" stroke-width="0.95" fill="none"/><path d="M958.5 193.0 l1 1.2 l1.8 -3" stroke="#f0f0f0" stroke-width="0.95" fill="none"/><path d="M958.5 210.5 l1 1.2 l1.8 -3" stroke="#f0f0f0" stroke-width="0.95" fill="none"/><path d="M841.5 231.1 l1 1.2 l1.8 -3" stroke="#e0e0e0" stroke-width="0.95" fill="none"/><rect x="903.8" y="228.3" width="5.4" height="5.4" fill="none" stroke="#b8b8b8" stroke-width="0.6"/><path d="M905.2 232.3 h1.4 v-2.6 h1.4" stroke="#b8b8b8" stroke-width="0.6" fill="none"/><path d="M833.5 241.7 h3 l-1.5 1.9z" fill="#d0d0d0"/><path d="M911 252.4 l2 -1.9 l2 1.9 v2.6 h-4z" fill="#a8a8a8"/><path d="M868.2 262.20000000000005 l2 -1.9 l2 1.9 v2.6 h-4z" fill="#a8a8a8"/><path d="M833.5 273.40000000000003 h3 l-1.5 1.9z" fill="#d0d0d0"/><circle cx="847.8" cy="285.7" r="1.3" fill="#2d8ceb"/><path d="M857.3 287.8 l1.7 -4 l1.7 4z M859 283.8 v4 M857.4 286.4 h3.2" fill="#b0b0b0" stroke="#1e1e1e" stroke-width="0.3"/><path d="M858.4 333.8 h3.2 l0.9 1.2 l-0.9 1.2 h-3.2z" fill="#c0c0c0"/></svg>
<div style="left:865.6px;top:293.6px;width:82.4px;height:82.4px;border-radius:50%;background:conic-gradient(from 0deg,#ff0000,#ff00ff 16.6%,#0000ff 33.3%,#00ffff 50%,#00ff00 66.6%,#ffff00 83.3%,#ff0000);-webkit-mask:radial-gradient(circle,transparent 23.4px,#000 24px,#000 40.8px,transparent 41.3px);mask:radial-gradient(circle,transparent 23.4px,#000 24px,#000 40.8px,transparent 41.3px)"></div>
<div class="t" style="left:838.5px;top:383.80px;font-size:4.5px;line-height:5.40px;color:#8c8c8c;">Temperature</div>
<div style="left:869.4px;top:387px;width:83.3px;height:1.2px;background:linear-gradient(90deg,#1c6ee4 0,#2a66b8 30%,#5a6068 47%,#6a6058 53%,#c0702a 70%,#e47c14);"></div>
<div class="t" style="right:17.399999999999977px;top:384.50px;font-size:4.5px;line-height:5.40px;color:#2e8fd8;text-align:right;">0,0</div>
<div class="t" style="left:838.5px;top:394.00px;font-size:4.5px;line-height:5.40px;color:#8c8c8c;">Tint</div>
<div style="left:869.4px;top:397px;width:83.3px;height:1.2px;background:linear-gradient(90deg,#14d814 0,#2aa82a 30%,#586058 47%,#685868 53%,#b82ab8 70%,#e414e4);"></div>
<div class="t" style="right:17.399999999999977px;top:394.70px;font-size:4.5px;line-height:5.40px;color:#2e8fd8;text-align:right;">0,0</div>
<div class="t" style="left:838.5px;top:403.90px;font-size:4.5px;line-height:5.40px;color:#8c8c8c;">Contrast</div>
<div style="left:869.4px;top:407px;width:83.3px;height:1.2px;background:#111;"></div>
<div class="t" style="right:17.399999999999977px;top:404.60px;font-size:4.5px;line-height:5.40px;color:#2e8fd8;text-align:right;">0,0</div>
<div class="t" style="left:838.5px;top:413.90px;font-size:4.5px;line-height:5.40px;color:#8c8c8c;">Sharpen</div>
<div style="left:869.4px;top:417px;width:83.3px;height:1.2px;background:#111;"></div>
<div class="t" style="right:17.399999999999977px;top:414.60px;font-size:4.5px;line-height:5.40px;color:#2e8fd8;text-align:right;">0,0</div>
<div class="t" style="left:838.5px;top:423.80px;font-size:4.5px;line-height:5.40px;color:#8c8c8c;">Saturation</div>
<div style="left:869.4px;top:427px;width:83.3px;height:1.2px;background:#111;"></div>
<div class="t" style="right:12px;top:424.50px;font-size:4.5px;line-height:5.40px;color:#2e8fd8;text-align:right;">100,0</div>
<div style="left:829px;top:431.8px;width:143px;height:0.7px;background:#171717;"></div>
<div class="t" style="left:832.5px;top:437.60px;font-size:4.5px;line-height:5.40px;color:#a0a0a0;">Vignette</div>
<div style="left:961.9px;top:436.0px;width:5.2px;height:5.2px;background:#151515;"></div>
<div style="left:829px;top:446.3px;width:143px;height:0.7px;background:#171717;"></div>
<svg style="left:0px;top:0px;" width="980" height="535" viewBox="0 0 980 535"><path d="M908.8 386.0 l2 -1.9 l2 1.9 v2.6 h-4z" fill="#a8a8a8"/><path d="M908.8 396.2 l2 -1.9 l2 1.9 v2.6 h-4z" fill="#a8a8a8"/><path d="M908.8 406.1 l2 -1.9 l2 1.9 v2.6 h-4z" fill="#a8a8a8"/><path d="M908.8 416.1 l2 -1.9 l2 1.9 v2.6 h-4z" fill="#a8a8a8"/><path d="M908.8 426.0 l2 -1.9 l2 1.9 v2.6 h-4z" fill="#a8a8a8"/><path d="M963.1 438.9 l1 1.2 l1.8 -3" stroke="#f0f0f0" stroke-width="0.95" fill="none"/></svg>
<div style="left:979.05px;top:0px;width:0.95px;height:535px;background:#f0f0f0;"></div>
</div></body></html>
